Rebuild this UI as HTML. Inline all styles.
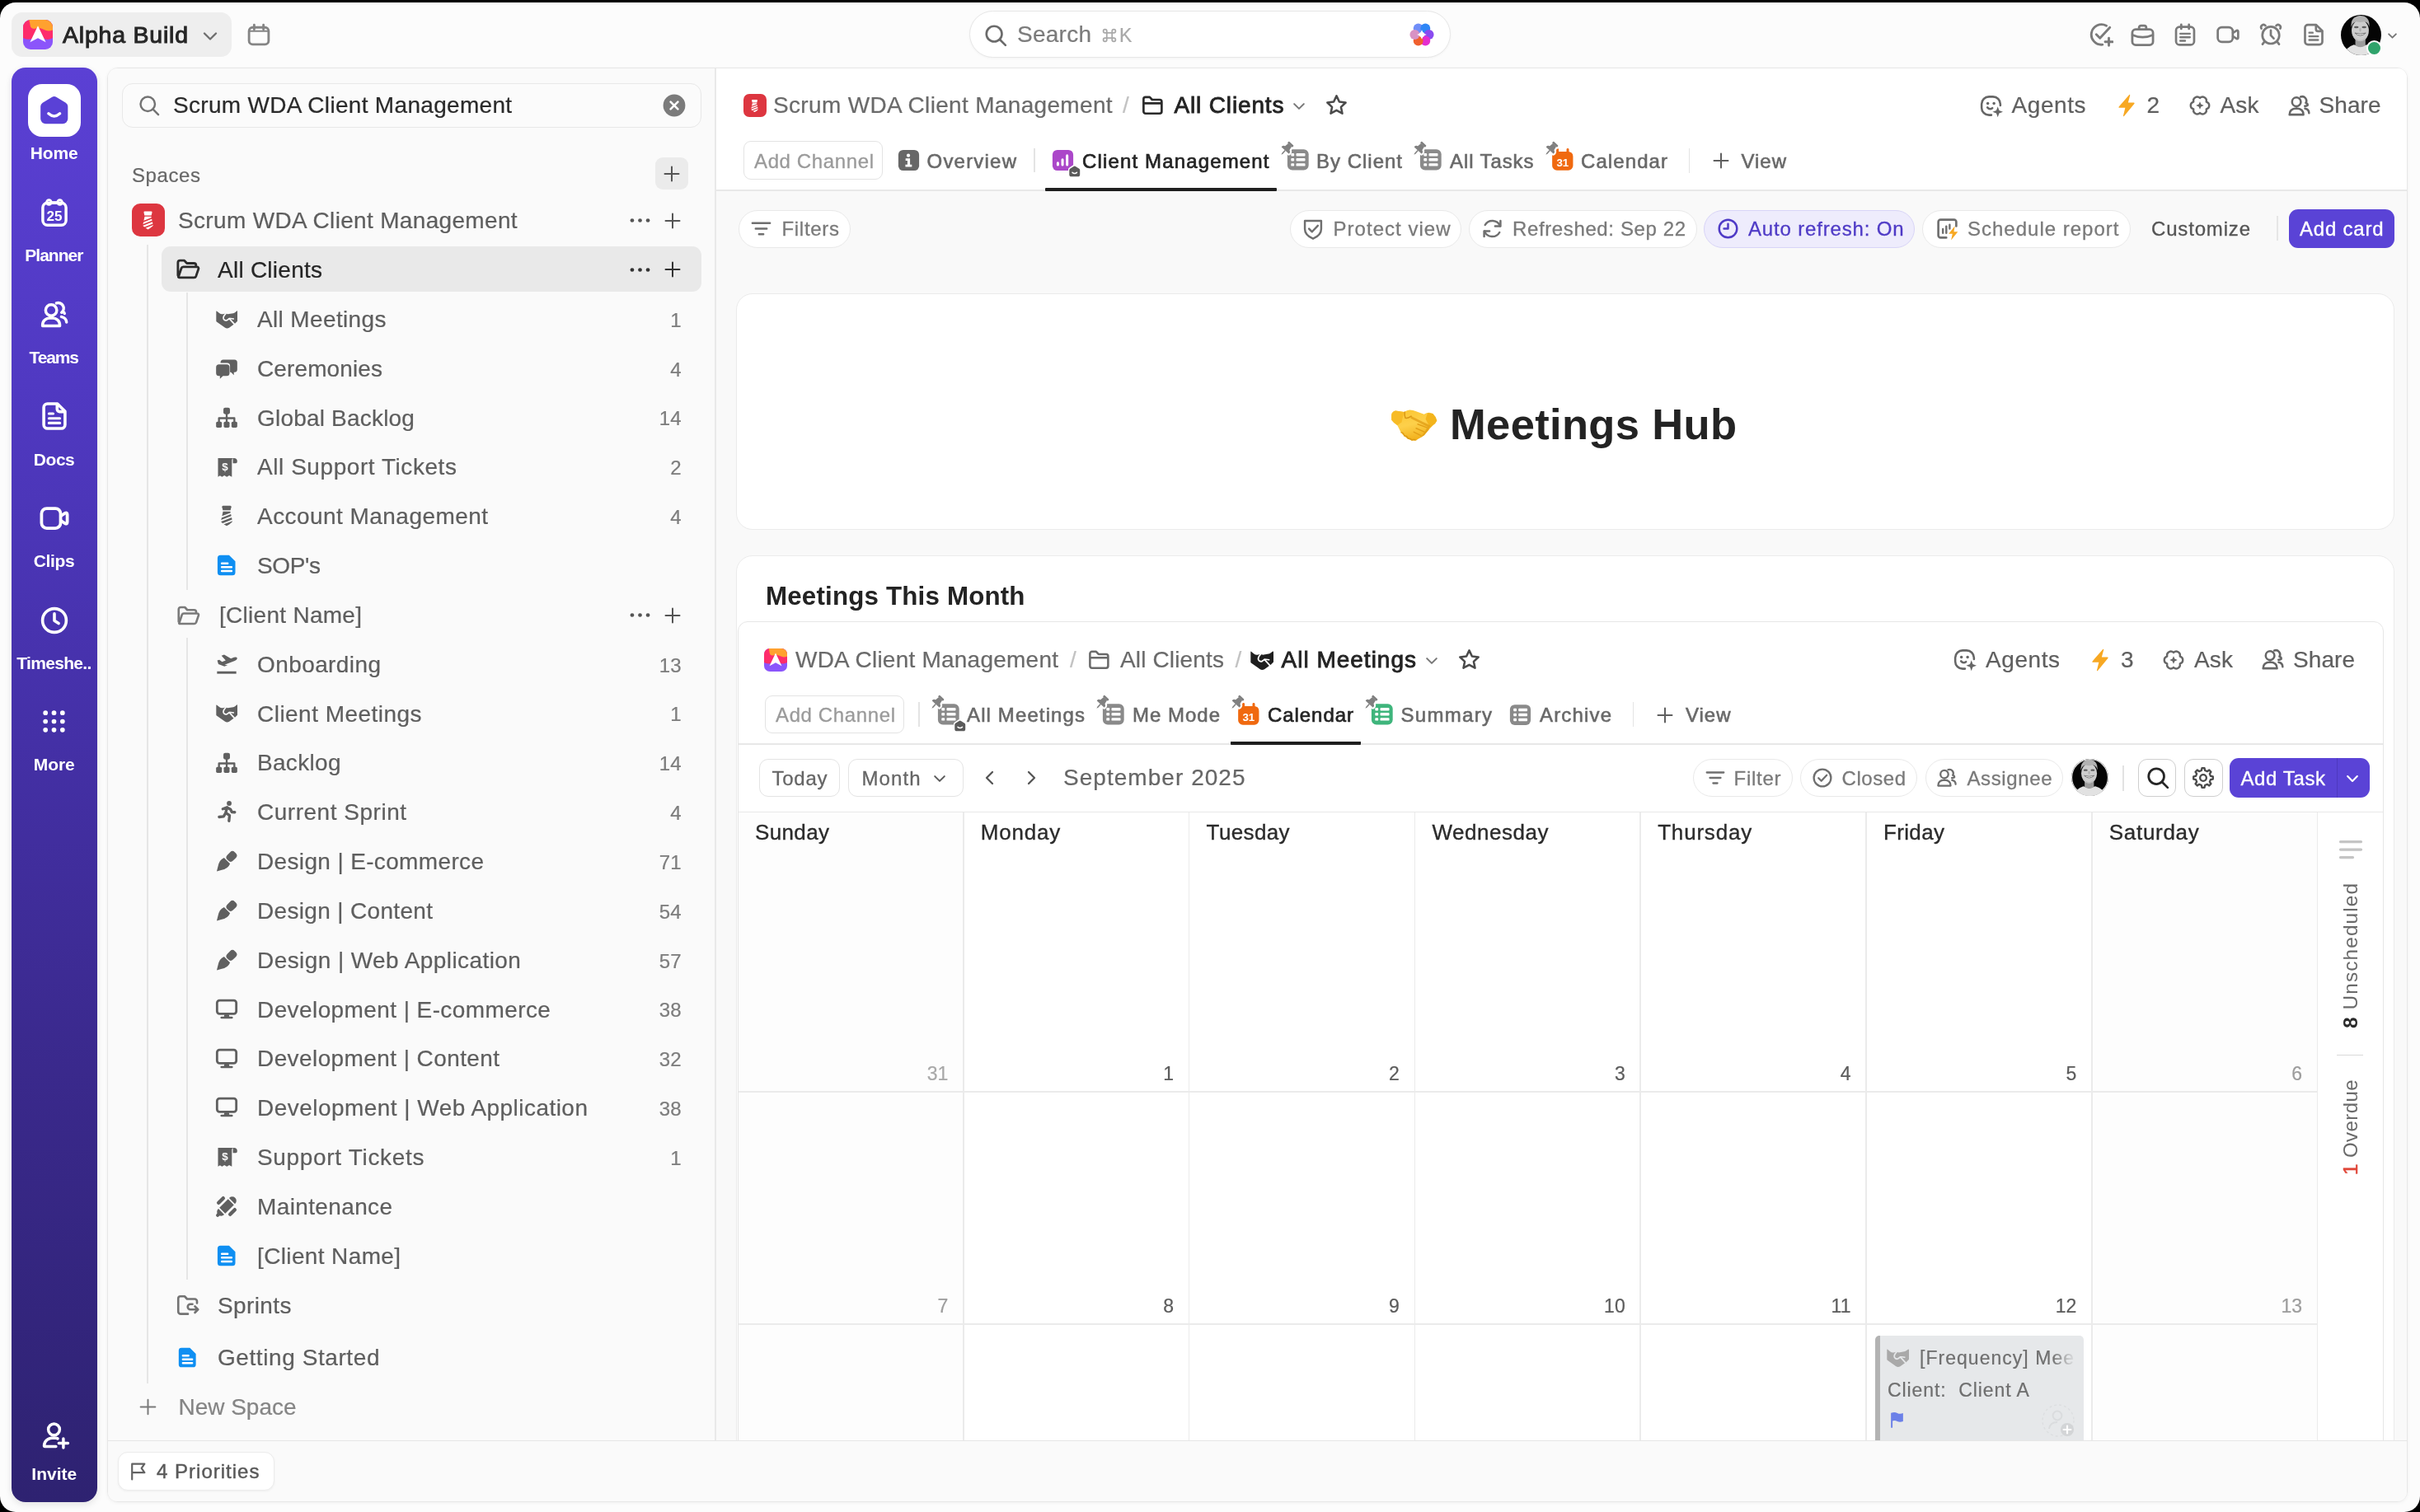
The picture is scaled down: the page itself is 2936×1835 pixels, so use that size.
<!DOCTYPE html>
<html lang="en"><head><meta charset="utf-8"><title>Alpha Build - All Clients</title>
<style>
html,body{margin:0;padding:0;}
body{width:2936px;height:1835px;overflow:hidden;background:#000;position:relative;font-family:"Liberation Sans",sans-serif;-webkit-font-smoothing:antialiased;}
#root{position:absolute;left:0;top:0;width:2936px;height:1835px;overflow:hidden;will-change:transform;}
.b{position:absolute;display:block;}
.t{position:absolute;white-space:pre;font-family:"Liberation Sans",sans-serif;-webkit-text-stroke:.22px currentColor;}
#win{position:absolute;left:0;top:3px;width:2936px;height:1832px;background:#fcfcfc;border-radius:19px;}
#nav{border-radius:17px;background:linear-gradient(180deg,#5b40d4 0%,#5039c2 22%,#4430a6 47%,#3a298c 70%,#2e2271 100%);box-shadow:0 3px 8px rgba(0,0,0,.10);}
#panel{box-sizing:border-box;border:1.5px solid #e7e7e7;border-radius:13px;background:#fff;box-shadow:0 1px 4px rgba(0,0,0,.05);}
.rot{position:absolute;left:0;top:0;white-space:pre;line-height:30px;height:30px;transform-origin:0 0;transform:rotate(-90deg) translate(0,-15px);font-family:"Liberation Sans",sans-serif;}
</style></head>
<body>
<div id="root">
<div id="win"></div>
<div class="b" style="left:14px;top:15px;width:267px;height:54px;background:#eeeeee;border-radius:13px;"></div>
<svg class="b" style="left:28px;top:24px;" width="36" height="36" viewBox="0 0 36 36"><defs><clipPath id="g1"><rect x="0" y="0" width="36" height="36" rx="9.00"/></clipPath></defs><g clip-path="url(#g1)"><rect width="36" height="36" fill="#8b55fb"/><path d="M0 0 H36 V22 Q30 25.5 24 22.6 Q18 19.6 12 22.6 Q6 25.4 0 22 Z" fill="#fe2c6b"/><path d="M7 0 H36 V12.4 Q30 14.6 25.4 12 Q20 9 15.2 10.6 Q9.4 12 8.6 6.6 Q8.4 3 7 0 Z" fill="#ffa12f"/><path d="M18 7.2 L27.6 27.2 L18 22.2 L8.4 27.2 Z" fill="#fff"/></g></svg>
<span class="t" style="left:76.0px;top:24.3px;font-size:28.5px;line-height:37px;color:#262626;letter-spacing:0.78px;-webkit-text-stroke:1px #262626;">Alpha Build</span>
<svg class="b" style="left:242.5px;top:31.5px;" width="24" height="24" viewBox="0 0 24 24"><path d="M5 8.5 L12 15.5 L19 8.5" fill="none" stroke="#6d6d6d" stroke-width="2.3" stroke-linecap="round" stroke-linejoin="round" /></svg>
<svg class="b" style="left:298.5px;top:27.0px;" width="30" height="30" viewBox="0 0 24 24"><rect x="2.5" y="5" width="19" height="16.5" rx="3.5" fill="none" stroke="#858585" stroke-width="2.3"/><path d="M7.5 2.5 V7 M16.5 2.5 V7" fill="none" stroke="#858585" stroke-width="2.3" stroke-linecap="round" stroke-linejoin="round" /><path d="M3 8.5 H21" fill="none" stroke="#858585" stroke-width="1.6" stroke-linecap="round" stroke-linejoin="round" /></svg>
<div class="b" style="left:1176px;top:13px;width:584px;height:57px;background:#fff;border:1.5px solid #e7e7e7;border-radius:29px;box-sizing:border-box;box-shadow:0 1px 3px rgba(0,0,0,.04);"></div>
<svg class="b" style="left:1193.0px;top:27.5px;" width="30" height="30" viewBox="0 0 24 24"><circle cx="10.5" cy="10.5" r="7.5" fill="none" stroke="#6b6b6b" stroke-width="2.1"/><path d="M16 16 L21.5 21.5" fill="none" stroke="#6b6b6b" stroke-width="2.1" stroke-linecap="round" stroke-linejoin="round" /></svg>
<span class="t" style="left:1234.0px;top:24.3px;font-size:28px;line-height:36px;color:#7b7b7b;letter-spacing:0.26px;">Search</span>
<svg class="b" style="left:1335.0px;top:32.0px;" width="22" height="22" viewBox="0 0 24 24"><path d="M8.5 8.5 H15.5 V15.5 H8.5 Z M8.5 8.5 H6.2 a2.3 2.3 0 1 1 2.3 -2.3 Z M15.5 8.5 V6.2 a2.3 2.3 0 1 1 2.3 2.3 Z M15.5 15.5 H17.8 a2.3 2.3 0 1 1 -2.3 2.3 Z M8.5 15.5 V17.8 a2.3 2.3 0 1 1 -2.3 -2.3 Z" fill="none" stroke="#a9a9a9" stroke-width="1.9" stroke-linecap="round" stroke-linejoin="round" /></svg>
<span class="t" style="left:1358.0px;top:28.3px;font-size:23px;line-height:30px;color:#a9a9a9;">K</span>
<svg class="b" style="left:1710px;top:26.8px;" width="30" height="30" viewBox="0 0 24 24"><defs><filter id="aib" x="-10%" y="-10%" width="120%" height="120%"><feGaussianBlur stdDeviation="0.55"/></filter></defs><g filter="url(#aib)"><circle cx="8.55" cy="6.02" r="4.75" fill="#6f8ef8"/><circle cx="15.45" cy="6.02" r="4.75" fill="#2f86f6"/><circle cx="18.90" cy="12.00" r="4.75" fill="#8a4cf0"/><circle cx="15.45" cy="17.98" r="4.75" fill="#e42fcf"/><circle cx="8.55" cy="17.98" r="4.75" fill="#f0602d"/><circle cx="5.10" cy="12.00" r="4.75" fill="#d892c4"/><path d="M12 7.4 L13.4 10.6 L16.6 12 L13.4 13.4 L12 16.6 L10.6 13.4 L7.4 12 L10.6 10.6 Z" fill="#fff" /><circle cx="12" cy="12" r="2.6" fill="#fff" fill-opacity=".6"/></g></svg>
<svg class="b" style="left:2534.0px;top:27.0px;" width="30" height="30" viewBox="0 0 24 24"><path d="M17.2 3.4 A9.8 9.8 0 1 0 13.4 21.7" fill="none" stroke="#7a7a7a" stroke-width="2.3" stroke-linecap="round" stroke-linejoin="round" /><path d="M7.4 11.8 L11 15.4 L20.6 5" fill="none" stroke="#7a7a7a" stroke-width="2.3" stroke-linecap="round" stroke-linejoin="round" /><path d="M19.6 15.4 V22.6 M16 19 H23.2" fill="none" stroke="#7a7a7a" stroke-width="2.3" stroke-linecap="round" stroke-linejoin="round" /></svg>
<svg class="b" style="left:2584.5px;top:27.5px;" width="29" height="29" viewBox="0 0 24 24"><rect x="1.6" y="6.4" width="20.8" height="15.6" rx="3.4" fill="none" stroke="#7a7a7a" stroke-width="2.3"/><path d="M8.4 6.2 V4.6 a2 2 0 0 1 2 -2 H13.6 a2 2 0 0 1 2 2 V6.2" fill="none" stroke="#7a7a7a" stroke-width="2.3" stroke-linecap="round" stroke-linejoin="round" /><path d="M1.8 12 Q12 16.4 22.2 12" fill="none" stroke="#7a7a7a" stroke-width="2.3" stroke-linecap="round" stroke-linejoin="round" /></svg>
<svg class="b" style="left:2637.0px;top:28.0px;" width="28" height="28" viewBox="0 0 24 24"><rect x="2.6" y="4" width="18.8" height="18.6" rx="3.6" fill="none" stroke="#7a7a7a" stroke-width="2.3"/><path d="M8 1.6 V6 M16 1.6 V6" fill="none" stroke="#7a7a7a" stroke-width="2.3" stroke-linecap="round" stroke-linejoin="round" /><path d="M7 11 H17 M7 14.8 H17 M7 18.4 H12" fill="none" stroke="#7a7a7a" stroke-width="2.0" stroke-linecap="round" stroke-linejoin="round" /></svg>
<svg class="b" style="left:2689.0px;top:28.0px;" width="28" height="28" viewBox="0 0 24 24"><rect x="1.4" y="4.4" width="15.6" height="15.2" rx="4.2" fill="none" stroke="#7a7a7a" stroke-width="2.3"/><path d="M17.2 10.2 L21 7.8 Q22.6 7.2 22.6 9 V15 Q22.6 16.8 21 16.2 L17.2 13.8" fill="none" stroke="#7a7a7a" stroke-width="2.3" stroke-linecap="round" stroke-linejoin="round" /></svg>
<svg class="b" style="left:2741.0px;top:28.0px;" width="28" height="28" viewBox="0 0 24 24"><circle cx="12" cy="12.6" r="8.8" fill="none" stroke="#7a7a7a" stroke-width="2.3"/><path d="M12 7.6 V12.8 L15 16" fill="none" stroke="#7a7a7a" stroke-width="2.3" stroke-linecap="round" stroke-linejoin="round" /><path d="M2.2 5.6 a2.6 2.6 0 0 1 4.2 -3 M21.8 5.6 a2.6 2.6 0 0 0 -4.2 -3" fill="none" stroke="#7a7a7a" stroke-width="2.3" stroke-linecap="round" stroke-linejoin="round" /><path d="M5.4 19.4 L3.4 22 M18.6 19.4 L20.6 22" fill="none" stroke="#7a7a7a" stroke-width="2.3" stroke-linecap="round" stroke-linejoin="round" /></svg>
<svg class="b" style="left:2792.5px;top:28.0px;" width="28" height="28" viewBox="0 0 24 24"><path d="M6 1.8 H14.6 L21 8.2 V19.4 a3 3 0 0 1 -3 3 H6 a3 3 0 0 1 -3 -3 V4.8 a3 3 0 0 1 3 -3 Z" fill="none" stroke="#7a7a7a" stroke-width="2.3" stroke-linecap="round" stroke-linejoin="round" /><path d="M14.4 2.2 V6.4 a2 2 0 0 0 2 2 H20.6" fill="none" stroke="#7a7a7a" stroke-width="2.3" stroke-linecap="round" stroke-linejoin="round" /><path d="M7.4 10 H11 M7.4 13.8 H16.6 M7.4 17.6 H16.6" fill="none" stroke="#7a7a7a" stroke-width="2.0" stroke-linecap="round" stroke-linejoin="round" /></svg>
<svg class="b" style="left:2839.8px;top:17.5px;" width="49" height="49" viewBox="0 0 48 48"><defs><clipPath id="g2"><circle cx="24" cy="24" r="24"/></clipPath><filter id="g3" x="-5%" y="-5%" width="110%" height="110%"><feGaussianBlur stdDeviation="0.55"/></filter></defs><g clip-path="url(#g2)"><rect width="48" height="48" fill="#050505"/><g filter="url(#g3)"><path d="M3 49 Q5 38.5 15.5 35.4 L23 38 L31 35.4 Q42 38 45 49 Z" fill="#e2e2e2"/><path d="M17.2 27 H29.2 V36.2 Q23.2 40.6 17.2 36.2 Z" fill="#9c9c9c"/><ellipse cx="23" cy="18.8" rx="10.2" ry="12.6" fill="#cdcdcd"/><path d="M12.4 14.6 Q11 2.4 22.6 1 Q34.6 1 33.8 14.4 Q32.4 8.4 27.4 8 Q23 9.4 18.6 8 Q13.8 8.6 12.4 14.6 Z" fill="#b2b2b2"/><ellipse cx="18.4" cy="14.6" rx="2.7" ry="1.25" fill="#5c5c5c"/><ellipse cx="27.6" cy="14.6" rx="2.7" ry="1.25" fill="#5c5c5c"/><path d="M22 16 Q21.4 19.6 23 20 Q24.6 19.6 24 16 Z" fill="#b0b0b0"/><path d="M16.6 21.6 Q23 27.6 29.6 21.6 Q23 23.6 16.6 21.6 Z" fill="#f7f7f7" stroke="#6e6e6e" stroke-width=".9"/><path d="M14 24 Q23 36 32 24 Q30 31 23 31.6 Q16 31 14 24 Z" fill="#bdbdbd"/></g></g></svg>
<div class="b" style="left:2873.8px;top:51.2px;width:15px;height:15px;border-radius:50%;background:#2fa36b;border:2.5px solid #fcfcfc;box-sizing:content-box;margin:-2.5px"></div>
<svg class="b" style="left:2894.7px;top:35.5px;" width="15" height="15" viewBox="0 0 24 24"><path d="M5 8.5 L12 15.5 L19 8.5" fill="none" stroke="#777" stroke-width="3.0" stroke-linecap="round" stroke-linejoin="round" /></svg>
<div class="b" id="nav" style="left:14px;top:82px;width:104px;height:1741px;"></div>
<div class="b" style="left:34px;top:102px;width:64px;height:64px;background:#fff;border-radius:17px;"></div>
<svg class="b" style="left:47.0px;top:114.7px;" width="37.5" height="37.5" viewBox="0 0 24 24"><path d="M12 1.2 Q12.8 1.2 13.6 1.7 L21 6.2 Q22.6 7.2 22.6 9 V18.6 a4 4 0 0 1 -4 4 H5.4 a4 4 0 0 1 -4 -4 V9 Q1.4 7.2 3 6.2 L10.4 1.7 Q11.2 1.2 12 1.2 Z" fill="#5a41d6" /><path d="M7.6 14.6 Q12 18.6 16.4 14.6" fill="none" stroke="#fff" stroke-width="2.2" stroke-linecap="round" stroke-linejoin="round" /></svg>
<span class="t" style="left:36.8px;top:172.2px;font-size:21px;line-height:27px;color:#fff;letter-spacing:-0.12px;font-weight:700;-webkit-text-stroke:0;">Home</span>
<span class="t" style="left:30.3px;top:296.3px;font-size:21px;line-height:27px;color:#fff;letter-spacing:-1.00px;font-weight:700;-webkit-text-stroke:0;">Planner</span>
<span class="t" style="left:35.5px;top:420.1px;font-size:21px;line-height:27px;color:#fff;letter-spacing:-1.12px;font-weight:700;-webkit-text-stroke:0;">Teams</span>
<span class="t" style="left:40.8px;top:543.6px;font-size:21px;line-height:27px;color:#fff;letter-spacing:-0.45px;font-weight:700;-webkit-text-stroke:0;">Docs</span>
<span class="t" style="left:40.8px;top:667.4px;font-size:21px;line-height:27px;color:#fff;letter-spacing:-0.34px;font-weight:700;-webkit-text-stroke:0;">Clips</span>
<span class="t" style="left:20.3px;top:791.1px;font-size:21px;line-height:27px;color:#fff;letter-spacing:-0.69px;font-weight:700;-webkit-text-stroke:0;">Timeshe..</span>
<span class="t" style="left:40.8px;top:914.4px;font-size:21px;line-height:27px;color:#fff;letter-spacing:-0.06px;font-weight:700;-webkit-text-stroke:0;">More</span>
<span class="t" style="left:38.3px;top:1775.3px;font-size:21px;line-height:27px;color:#fff;letter-spacing:0.03px;font-weight:700;-webkit-text-stroke:0;">Invite</span>
<svg class="b" style="left:47.7px;top:239.7px;" width="36" height="36" viewBox="0 0 24 24"><rect x="2.6" y="4.2" width="18.8" height="18" rx="3.8" fill="none" stroke="#fff" stroke-width="2.3"/><circle cx="7.6" cy="3.6" r="1.9" fill="none" stroke="#fff" stroke-width="1.9"/><circle cx="16.4" cy="3.6" r="1.9" fill="none" stroke="#fff" stroke-width="1.9"/><path d="M9.5 3.8 H14.5" fill="none" stroke="#fff" stroke-width="2.0" stroke-linecap="round" stroke-linejoin="round" /><text x="12" y="18.6" font-family="Liberation Sans, sans-serif" font-weight="700" font-size="11.4" text-anchor="middle" fill="#fff">25</text></svg>
<svg class="b" style="left:47.7px;top:363.5px;" width="36" height="36" viewBox="0 0 24 24"><path d="M9.4 12.8 a4.5 4.5 0 1 0 0 -9 a4.5 4.5 0 0 0 0 9 Z M2.4 21 Q2.2 14.8 9.4 14.6 Q16.6 14.8 16.4 21 Z" fill="none" stroke="#fff" stroke-width="2.3" stroke-linecap="round" stroke-linejoin="round" /><path d="M13.6 2.6 a4.4 4.4 0 0 1 4.2 7.6 Q19.8 8.8 20.2 11 M17.6 13.6 Q21.6 14.6 21.8 18" fill="none" stroke="#fff" stroke-width="2.3" stroke-linecap="round" stroke-linejoin="round" /></svg>
<svg class="b" style="left:47.7px;top:486.8px;" width="36" height="36" viewBox="0 0 24 24"><path d="M6.4 2 H14.4 L20.6 8.2 V19 a3 3 0 0 1 -3 3 H6.4 a3 3 0 0 1 -3 -3 V5 a3 3 0 0 1 3 -3 Z" fill="none" stroke="#fff" stroke-width="2.4" stroke-linecap="round" stroke-linejoin="round" /><path d="M14.2 2.4 V6.4 a2 2 0 0 0 2 2 H20.2" fill="none" stroke="#fff" stroke-width="2.4" stroke-linecap="round" stroke-linejoin="round" /><path d="M7.6 10 H11 M7.6 13.8 H16.4 M7.6 17.6 H16.4" fill="none" stroke="#fff" stroke-width="2.1" stroke-linecap="round" stroke-linejoin="round" /></svg>
<svg class="b" style="left:47.7px;top:610.6px;" width="36" height="36" viewBox="0 0 24 24"><rect x="1.6" y="4" width="15.4" height="16" rx="4.2" fill="none" stroke="#fff" stroke-width="2.5"/><path d="M17.4 10 L20.6 7.8 Q22.4 7 22.4 9 V15 Q22.4 17 20.6 16.2 L17.4 14" fill="none" stroke="#fff" stroke-width="2.5" stroke-linecap="round" stroke-linejoin="round" /></svg>
<svg class="b" style="left:47.7px;top:734.6px;" width="36" height="36" viewBox="0 0 24 24"><circle cx="12" cy="12" r="9.6" fill="none" stroke="#fff" stroke-width="2.4"/><path d="M12 6.6 V12.2 L15.4 14.4" fill="none" stroke="#fff" stroke-width="2.4" stroke-linecap="round" stroke-linejoin="round" /></svg>
<svg class="b" style="left:50.2px;top:860.1px;" width="31" height="31" viewBox="0 0 24 24"><circle cx="4" cy="4" r="2.2" fill="#fff"/><circle cx="4" cy="12" r="2.2" fill="#fff"/><circle cx="4" cy="20" r="2.2" fill="#fff"/><circle cx="12" cy="4" r="2.2" fill="#fff"/><circle cx="12" cy="12" r="2.2" fill="#fff"/><circle cx="12" cy="20" r="2.2" fill="#fff"/><circle cx="20" cy="4" r="2.2" fill="#fff"/><circle cx="20" cy="12" r="2.2" fill="#fff"/><circle cx="20" cy="20" r="2.2" fill="#fff"/></svg>
<svg class="b" style="left:48.5px;top:1723.5px;" width="36" height="36" viewBox="0 0 24 24"><path d="M11 11.8 a4.6 4.6 0 1 0 0 -9.2 a4.6 4.6 0 0 0 0 9.2 Z" fill="none" stroke="#fff" stroke-width="2.3" stroke-linecap="round" stroke-linejoin="round" /><path d="M12.6 21 H3.6 Q3 21 3 20.2 Q3.6 14.2 11 14 Q12.8 14 14 14.6" fill="none" stroke="#fff" stroke-width="2.3" stroke-linecap="round" stroke-linejoin="round" /><path d="M18.6 14.6 V22 M14.9 18.3 H22.3" fill="none" stroke="#fff" stroke-width="2.3" stroke-linecap="round" stroke-linejoin="round" /></svg>
<div class="b" id="panel" style="left:129.5px;top:82px;width:2791.5px;height:1741px;"></div>
<div class="b" style="left:131px;top:83px;width:736px;height:1665px;background:#fafafa;border-top-left-radius:11px;"></div>
<div class="b" style="left:867px;top:83px;width:1.5px;height:1665px;background:#e9e9e9;"></div>
<div class="b" style="left:131px;top:1747.5px;width:2789px;height:1.5px;background:#e6e6e6;"></div>
<div class="b" style="left:131px;top:1749px;width:2789px;height:73px;background:#fafafa;border-radius:0 0 11px 11px;"></div>
<div class="b" style="left:142.5px;top:1762px;width:190.5px;height:47px;background:#fff;border:1px solid #ececec;border-radius:12px;box-sizing:border-box;box-shadow:0 1px 3px rgba(0,0,0,.05);"></div>
<svg class="b" style="left:154.5px;top:1773.0px;" width="25" height="25" viewBox="0 0 24 24"><path d="M5 21.5 V3.5 H19.5 L16 8.5 L19.5 13.5 H5" fill="none" stroke="#636363" stroke-width="2.1" stroke-linecap="round" stroke-linejoin="round" /></svg>
<span class="t" style="left:190.0px;top:1770.3px;font-size:24px;line-height:31px;color:#595959;letter-spacing:1.01px;-webkit-text-stroke:.45px #595959;">4 Priorities</span>
<div class="b" style="left:148px;top:101px;width:703px;height:54px;background:#fbfbfb;border:1.5px solid #e8e8e8;border-radius:13px;box-sizing:border-box;"></div>
<svg class="b" style="left:167.0px;top:114.0px;" width="28" height="28" viewBox="0 0 24 24"><circle cx="10.5" cy="10.5" r="7.5" fill="none" stroke="#737373" stroke-width="2.1"/><path d="M16 16 L21.5 21.5" fill="none" stroke="#737373" stroke-width="2.1" stroke-linecap="round" stroke-linejoin="round" /></svg>
<span class="t" style="left:210.0px;top:109.8px;font-size:28px;line-height:36px;color:#2a2a2a;letter-spacing:0.31px;">Scrum WDA Client Management</span>
<svg class="b" style="left:804px;top:114px" width="28" height="28" viewBox="0 0 28 28"><circle cx="14" cy="14" r="13.4" fill="#7b7b7b"/><path d="M9.6 9.6 L18.4 18.4 M18.4 9.6 L9.6 18.4" stroke="#fff" stroke-width="2.6" stroke-linecap="round"/></svg>
<span class="t" style="left:160.0px;top:196.8px;font-size:24px;line-height:31px;color:#676767;letter-spacing:0.59px;">Spaces</span>
<div class="b" style="left:795px;top:191px;width:40px;height:39px;background:#ebebeb;border-radius:9px;"></div>
<svg class="b" style="left:803.0px;top:198.5px;" width="24" height="24" viewBox="0 0 24 24"><path d="M12 3.5 V20.5 M3.5 12 H20.5" fill="none" stroke="#555" stroke-width="2.0" stroke-linecap="round" stroke-linejoin="round" /></svg>
<div class="b" style="left:178px;top:297px;width:1.5px;height:1382px;background:#e6e6e6;"></div>
<div class="b" style="left:226px;top:355px;width:1.5px;height:361px;background:#e6e6e6;"></div>
<div class="b" style="left:226px;top:774px;width:1.5px;height:779px;background:#e6e6e6;"></div>
<div class="b" style="left:159.5px;top:247px;width:40.0px;height:40px;background:#dd3640;border-radius:10px;"></div>
<svg class="b" style="left:167.0px;top:254.5px;" width="25" height="25" viewBox="0 0 24 24"><path d="M8.2 1.5 H15.8 Q17 1.5 16.8 2.8 L16 6.2 H8 L7.2 2.8 Q7 1.5 8.2 1.5 Z" fill="#fff" /><path d="M8.2 7.5 H15.8 L18 17.5 Q18 19 12 22.5 Q6 19 6 17.5 Z" fill="#fff" /><path d="M6.8 13.2 L16.6 9.4 M6 17.2 L17.6 12.8 M8.2 20.4 L18 16.6" fill="none" stroke="#dd3640" stroke-width="1.5" stroke-linecap="round" stroke-linejoin="round" /></svg>
<span class="t" style="left:216.0px;top:249.8px;font-size:28px;line-height:36px;color:#5e5e5e;letter-spacing:0.33px;">Scrum WDA Client Management</span>
<svg class="b" style="left:762.5px;top:254.0px;" width="27" height="27" viewBox="0 0 24 24"><circle cx="3.5" cy="12" r="2.1" fill="#555"/><circle cx="12" cy="12" r="2.1" fill="#555"/><circle cx="20.5" cy="12" r="2.1" fill="#555"/></svg>
<svg class="b" style="left:803.5px;top:255.5px;" width="24" height="24" viewBox="0 0 24 24"><path d="M12 3.5 V20.5 M3.5 12 H20.5" fill="none" stroke="#555" stroke-width="2.0" stroke-linecap="round" stroke-linejoin="round" /></svg>
<div class="b" style="left:196px;top:299.3px;width:655px;height:55.19999999999999px;background:#e9e9e9;border-radius:11px;"></div>
<svg class="b" style="left:212.3px;top:311.1px;" width="31" height="31" viewBox="0 0 24 24"><path d="M3 18 V6 a2 2 0 0 1 2 -2 H9 l2.4 2.6 H18 a2 2 0 0 1 2 2 V10 M3.4 19.6 L6.2 11.3 a2 2 0 0 1 1.9 -1.3 H21 a1.4 1.4 0 0 1 1.3 1.9 L20 18.7 a2 2 0 0 1 -1.9 1.3 H4.6 a1.4 1.4 0 0 1 -1.2 -.4 Z" fill="none" stroke="#2c2c2c" stroke-width="2.2" stroke-linecap="round" stroke-linejoin="round" /></svg>
<span class="t" style="left:264.0px;top:310.1px;font-size:28px;line-height:36px;color:#252525;letter-spacing:0.25px;">All Clients</span>
<svg class="b" style="left:762.5px;top:313.5px;" width="27" height="27" viewBox="0 0 24 24"><circle cx="3.5" cy="12" r="2.1" fill="#333"/><circle cx="12" cy="12" r="2.1" fill="#333"/><circle cx="20.5" cy="12" r="2.1" fill="#333"/></svg>
<svg class="b" style="left:803.5px;top:315.0px;" width="24" height="24" viewBox="0 0 24 24"><path d="M12 3.5 V20.5 M3.5 12 H20.5" fill="none" stroke="#333" stroke-width="2.0" stroke-linecap="round" stroke-linejoin="round" /></svg>
<svg class="b" style="left:261.8px;top:373.8px;" width="26.4" height="26.4" viewBox="0 0 24 24"><g transform="translate(0 2.6) scale(0.923)"><path d="M0.9 0.6 L4 3.2 Q6 4.7 8 4.3 L12 3.5 L14 4.4 L20.5 3.3 Q21.6 3.2 22.4 2.6 L25.2 0.5 Q26 0.3 26 1.2 V12.4 L23.2 15.2 L15.8 20.6 Q13.2 22.2 10.6 20.4 L0.8 13.4 Q0.3 13 0.3 12.4 V1.2 Q0.3 0.3 0.9 0.6 Z" fill="#606060" /><path d="M11.8 3.6 Q8.2 7 9 9.8 Q10.6 12.8 13.4 11.4 L15.9 9.6 L21.8 16" fill="none" stroke="#fafafa" stroke-width="1.7" stroke-linecap="round" stroke-linejoin="round" /><path d="M15.9 9.6 Q18.4 9.2 21 10" fill="none" stroke="#fafafa" stroke-width="1.5" stroke-linecap="round" stroke-linejoin="round" /></g></svg>
<span class="t" style="left:312.0px;top:369.8px;font-size:28px;line-height:36px;color:#5e5e5e;letter-spacing:0.36px;">All Meetings</span>
<span class="t" style="left:813.2px;top:372.8px;font-size:24px;line-height:31px;color:#7d7d7d;">1</span>
<svg class="b" style="left:261.0px;top:432.8px;" width="28" height="28" viewBox="0 0 24 24"><path d="M8.5 3 H20 a3 3 0 0 1 3 3 V13 a3 3 0 0 1 -3 3 H19.5 V19 L16.5 16 H15.5 V9.5 a3 3 0 0 0 -3 -3 H5.6 V6 a3 3 0 0 1 2.9 -3 Z" fill="#606060" /><path d="M4 8 H12 a3 3 0 0 1 3 3 V17 a3 3 0 0 1 -3 3 H8.2 L5 23 V20 H4 a3 3 0 0 1 -3 -3 V11 a3 3 0 0 1 3 -3 Z" fill="#606060" /></svg>
<span class="t" style="left:312.0px;top:429.7px;font-size:28px;line-height:36px;color:#5e5e5e;letter-spacing:0.12px;">Ceremonies</span>
<span class="t" style="left:813.2px;top:432.6px;font-size:24px;line-height:31px;color:#7d7d7d;">4</span>
<svg class="b" style="left:261.0px;top:492.7px;" width="28" height="28" viewBox="0 0 24 24"><rect x="8.6" y="1.5" width="6.8" height="6.8" rx="1.8" fill="#606060"/><rect x="1" y="16" width="6" height="6.2" rx="1.4" fill="#606060"/><rect x="9" y="16" width="6" height="6.2" rx="1.4" fill="#606060"/><rect x="17" y="16" width="6" height="6.2" rx="1.4" fill="#606060"/><path d="M12 8 V16 M4 16 V12.4 H20 V16" fill="none" stroke="#606060" stroke-width="2.0" stroke-linecap="round" stroke-linejoin="round" /></svg>
<span class="t" style="left:312.0px;top:489.5px;font-size:28px;line-height:36px;color:#5e5e5e;letter-spacing:0.20px;">Global Backlog</span>
<span class="t" style="left:799.8px;top:492.4px;font-size:24px;line-height:31px;color:#7d7d7d;">14</span>
<svg class="b" style="left:261.0px;top:552.5px;" width="28" height="28" viewBox="0 0 24 24"><path d="M3 2.5 H18.5 V8 H21.5 Q23 8 23 6 Q23 2.5 19.5 2.5 H19 Q17.4 2.7 17.4 5 V22 L14.6 20.6 L12.2 22 L9.6 20.6 L7.2 22 L5 20.8 L3 22 Z" fill="#606060" /><text x="10.2" y="15.6" font-family="Liberation Sans, sans-serif" font-weight="700" font-size="11.5" text-anchor="middle" fill="#fafafa">$</text></svg>
<span class="t" style="left:312.0px;top:549.3px;font-size:28px;line-height:36px;color:#5e5e5e;letter-spacing:0.56px;">All Support Tickets</span>
<span class="t" style="left:813.2px;top:552.3px;font-size:24px;line-height:31px;color:#7d7d7d;">2</span>
<svg class="b" style="left:261.0px;top:612.3px;" width="28" height="28" viewBox="0 0 24 24"><path d="M8.2 1.5 H15.8 Q17 1.5 16.8 2.8 L16 6.2 H8 L7.2 2.8 Q7 1.5 8.2 1.5 Z" fill="#606060" /><path d="M8.2 7.5 H15.8 L18 17.5 Q18 19 12 22.5 Q6 19 6 17.5 Z" fill="#606060" /><path d="M6.8 13.2 L16.6 9.4 M6 17.2 L17.6 12.8 M8.2 20.4 L18 16.6" fill="none" stroke="#fafafa" stroke-width="1.5" stroke-linecap="round" stroke-linejoin="round" /></svg>
<span class="t" style="left:312.0px;top:609.2px;font-size:28px;line-height:36px;color:#5e5e5e;letter-spacing:0.45px;">Account Management</span>
<span class="t" style="left:813.2px;top:612.1px;font-size:24px;line-height:31px;color:#7d7d7d;">4</span>
<svg class="b" style="left:261.0px;top:672.2px;" width="28" height="28" viewBox="0 0 24 24"><path d="M5.5 1.5 H14.5 L21 8 V19.5 a3 3 0 0 1 -3 3 H5.5 a3 3 0 0 1 -3 -3 V4.5 a3 3 0 0 1 3 -3 Z" fill="#0f8ff2" /><path d="M7 10 H13 M7 14 H17 M7 18 H17" fill="none" stroke="#fff" stroke-width="2.2" stroke-linecap="round" stroke-linejoin="round" /></svg>
<span class="t" style="left:312.0px;top:669.0px;font-size:28px;line-height:36px;color:#5e5e5e;letter-spacing:-0.37px;">SOP&#x27;s</span>
<svg class="b" style="left:213.0px;top:731.5px;" width="30" height="30" viewBox="0 0 24 24"><path d="M3 18 V6 a2 2 0 0 1 2 -2 H9 l2.4 2.6 H18 a2 2 0 0 1 2 2 V10 M3.4 19.6 L6.2 11.3 a2 2 0 0 1 1.9 -1.3 H21 a1.4 1.4 0 0 1 1.3 1.9 L20 18.7 a2 2 0 0 1 -1.9 1.3 H4.6 a1.4 1.4 0 0 1 -1.2 -.4 Z" fill="none" stroke="#7a7a7a" stroke-width="2.1" stroke-linecap="round" stroke-linejoin="round" /></svg>
<span class="t" style="left:266.0px;top:728.8px;font-size:28px;line-height:36px;color:#5e5e5e;letter-spacing:0.28px;">[Client Name]</span>
<svg class="b" style="left:762.5px;top:733.0px;" width="27" height="27" viewBox="0 0 24 24"><circle cx="3.5" cy="12" r="2.1" fill="#555"/><circle cx="12" cy="12" r="2.1" fill="#555"/><circle cx="20.5" cy="12" r="2.1" fill="#555"/></svg>
<svg class="b" style="left:803.5px;top:734.5px;" width="24" height="24" viewBox="0 0 24 24"><path d="M12 3.5 V20.5 M3.5 12 H20.5" fill="none" stroke="#555" stroke-width="2.0" stroke-linecap="round" stroke-linejoin="round" /></svg>
<svg class="b" style="left:261.0px;top:791.8px;" width="28" height="28" viewBox="0 0 24 24"><path d="M2 19.5 H22 V22 H2 Z" fill="#606060" /><path d="M2.2 8.2 L4.4 7.4 L7.2 9.6 L11 8.2 L6.6 3.2 L9.4 2.2 L16.4 6.2 L19.6 5 Q22.6 4.2 23 6 Q22.8 7.6 20.4 8.6 L9.8 12.6 L13 13 L9.6 14.4 L3.4 12 Z" fill="#606060" /></svg>
<span class="t" style="left:312.0px;top:788.6px;font-size:28px;line-height:36px;color:#5e5e5e;letter-spacing:0.41px;">Onboarding</span>
<span class="t" style="left:799.8px;top:791.6px;font-size:24px;line-height:31px;color:#7d7d7d;">13</span>
<svg class="b" style="left:261.8px;top:852.4px;" width="26.4" height="26.4" viewBox="0 0 24 24"><g transform="translate(0 2.6) scale(0.923)"><path d="M0.9 0.6 L4 3.2 Q6 4.7 8 4.3 L12 3.5 L14 4.4 L20.5 3.3 Q21.6 3.2 22.4 2.6 L25.2 0.5 Q26 0.3 26 1.2 V12.4 L23.2 15.2 L15.8 20.6 Q13.2 22.2 10.6 20.4 L0.8 13.4 Q0.3 13 0.3 12.4 V1.2 Q0.3 0.3 0.9 0.6 Z" fill="#606060" /><path d="M11.8 3.6 Q8.2 7 9 9.8 Q10.6 12.8 13.4 11.4 L15.9 9.6 L21.8 16" fill="none" stroke="#fafafa" stroke-width="1.7" stroke-linecap="round" stroke-linejoin="round" /><path d="M15.9 9.6 Q18.4 9.2 21 10" fill="none" stroke="#fafafa" stroke-width="1.5" stroke-linecap="round" stroke-linejoin="round" /></g></svg>
<span class="t" style="left:312.0px;top:848.5px;font-size:28px;line-height:36px;color:#5e5e5e;letter-spacing:0.47px;">Client Meetings</span>
<span class="t" style="left:813.2px;top:851.4px;font-size:24px;line-height:31px;color:#7d7d7d;">1</span>
<svg class="b" style="left:261.0px;top:911.5px;" width="28" height="28" viewBox="0 0 24 24"><rect x="8.6" y="1.5" width="6.8" height="6.8" rx="1.8" fill="#606060"/><rect x="1" y="16" width="6" height="6.2" rx="1.4" fill="#606060"/><rect x="9" y="16" width="6" height="6.2" rx="1.4" fill="#606060"/><rect x="17" y="16" width="6" height="6.2" rx="1.4" fill="#606060"/><path d="M12 8 V16 M4 16 V12.4 H20 V16" fill="none" stroke="#606060" stroke-width="2.0" stroke-linecap="round" stroke-linejoin="round" /></svg>
<span class="t" style="left:312.0px;top:908.3px;font-size:28px;line-height:36px;color:#5e5e5e;letter-spacing:0.31px;">Backlog</span>
<span class="t" style="left:799.8px;top:911.3px;font-size:24px;line-height:31px;color:#7d7d7d;">14</span>
<svg class="b" style="left:261.0px;top:971.3px;" width="28" height="28" viewBox="0 0 24 24"><circle cx="14.6" cy="3.4" r="2.5" fill="#606060"/><path d="M8 9.2 L12.4 7.6 L11 13.2 L15 16 L14.4 21.6 M12.4 7.8 L16 9.6 L17.4 12.4 L20.4 12.6 M11 13.4 L8.8 17 L4.2 17.6" fill="none" stroke="#606060" stroke-width="2.9" stroke-linecap="round" stroke-linejoin="round" /></svg>
<span class="t" style="left:312.0px;top:968.1px;font-size:28px;line-height:36px;color:#5e5e5e;letter-spacing:0.52px;">Current Sprint</span>
<span class="t" style="left:813.2px;top:971.1px;font-size:24px;line-height:31px;color:#7d7d7d;">4</span>
<svg class="b" style="left:261.0px;top:1031.1px;" width="28" height="28" viewBox="0 0 24 24"><rect x="11.6" y="3" width="11" height="8.4" rx="3.4" fill="#606060" transform="rotate(-45 17.1 7.2)"/><path d="M9.3 8.5 L15.5 14.7 Q13.6 20 6.2 21.4 L1.7 22.7 L2.8 18.2 Q4 10.6 9.3 8.5 Z" fill="#606060" /></svg>
<span class="t" style="left:312.0px;top:1028.0px;font-size:28px;line-height:36px;color:#5e5e5e;letter-spacing:0.35px;">Design | E-commerce</span>
<span class="t" style="left:799.8px;top:1030.9px;font-size:24px;line-height:31px;color:#7d7d7d;">71</span>
<svg class="b" style="left:261.0px;top:1091.0px;" width="28" height="28" viewBox="0 0 24 24"><rect x="11.6" y="3" width="11" height="8.4" rx="3.4" fill="#606060" transform="rotate(-45 17.1 7.2)"/><path d="M9.3 8.5 L15.5 14.7 Q13.6 20 6.2 21.4 L1.7 22.7 L2.8 18.2 Q4 10.6 9.3 8.5 Z" fill="#606060" /></svg>
<span class="t" style="left:312.0px;top:1087.8px;font-size:28px;line-height:36px;color:#5e5e5e;letter-spacing:0.33px;">Design | Content</span>
<span class="t" style="left:799.8px;top:1090.7px;font-size:24px;line-height:31px;color:#7d7d7d;">54</span>
<svg class="b" style="left:261.0px;top:1150.8px;" width="28" height="28" viewBox="0 0 24 24"><rect x="11.6" y="3" width="11" height="8.4" rx="3.4" fill="#606060" transform="rotate(-45 17.1 7.2)"/><path d="M9.3 8.5 L15.5 14.7 Q13.6 20 6.2 21.4 L1.7 22.7 L2.8 18.2 Q4 10.6 9.3 8.5 Z" fill="#606060" /></svg>
<span class="t" style="left:312.0px;top:1147.6px;font-size:28px;line-height:36px;color:#5e5e5e;letter-spacing:0.42px;">Design | Web Application</span>
<span class="t" style="left:799.8px;top:1150.6px;font-size:24px;line-height:31px;color:#7d7d7d;">57</span>
<svg class="b" style="left:261.0px;top:1210.6px;" width="28" height="28" viewBox="0 0 24 24"><rect x="2" y="2.6" width="20" height="14" rx="2.6" fill="none" stroke="#606060" stroke-width="2.4"/><path d="M9.8 16.6 H14.2 L14.8 19.4 H17.4 a1.1 1.1 0 0 1 0 2.2 H6.6 a1.1 1.1 0 0 1 0 -2.2 H9.2 Z" fill="#606060" /></svg>
<span class="t" style="left:312.0px;top:1207.5px;font-size:28px;line-height:36px;color:#5e5e5e;letter-spacing:0.41px;">Development | E-commerce</span>
<span class="t" style="left:799.8px;top:1210.4px;font-size:24px;line-height:31px;color:#7d7d7d;">38</span>
<svg class="b" style="left:261.0px;top:1270.5px;" width="28" height="28" viewBox="0 0 24 24"><rect x="2" y="2.6" width="20" height="14" rx="2.6" fill="none" stroke="#606060" stroke-width="2.4"/><path d="M9.8 16.6 H14.2 L14.8 19.4 H17.4 a1.1 1.1 0 0 1 0 2.2 H6.6 a1.1 1.1 0 0 1 0 -2.2 H9.2 Z" fill="#606060" /></svg>
<span class="t" style="left:312.0px;top:1267.3px;font-size:28px;line-height:36px;color:#5e5e5e;letter-spacing:0.41px;">Development | Content</span>
<span class="t" style="left:799.8px;top:1270.2px;font-size:24px;line-height:31px;color:#7d7d7d;">32</span>
<svg class="b" style="left:261.0px;top:1330.3px;" width="28" height="28" viewBox="0 0 24 24"><rect x="2" y="2.6" width="20" height="14" rx="2.6" fill="none" stroke="#606060" stroke-width="2.4"/><path d="M9.8 16.6 H14.2 L14.8 19.4 H17.4 a1.1 1.1 0 0 1 0 2.2 H6.6 a1.1 1.1 0 0 1 0 -2.2 H9.2 Z" fill="#606060" /></svg>
<span class="t" style="left:312.0px;top:1327.1px;font-size:28px;line-height:36px;color:#5e5e5e;letter-spacing:0.46px;">Development | Web Application</span>
<span class="t" style="left:799.8px;top:1330.1px;font-size:24px;line-height:31px;color:#7d7d7d;">38</span>
<svg class="b" style="left:261.0px;top:1390.1px;" width="28" height="28" viewBox="0 0 24 24"><path d="M3 2.5 H18.5 V8 H21.5 Q23 8 23 6 Q23 2.5 19.5 2.5 H19 Q17.4 2.7 17.4 5 V22 L14.6 20.6 L12.2 22 L9.6 20.6 L7.2 22 L5 20.8 L3 22 Z" fill="#606060" /><text x="10.2" y="15.6" font-family="Liberation Sans, sans-serif" font-weight="700" font-size="11.5" text-anchor="middle" fill="#fafafa">$</text></svg>
<span class="t" style="left:312.0px;top:1386.9px;font-size:28px;line-height:36px;color:#5e5e5e;letter-spacing:0.68px;">Support Tickets</span>
<span class="t" style="left:813.2px;top:1389.9px;font-size:24px;line-height:31px;color:#7d7d7d;">1</span>
<svg class="b" style="left:261.0px;top:1449.9px;" width="28" height="28" viewBox="0 0 24 24"><path d="M3.6 8.4 L8.4 3.6 M15.6 20.4 L20.4 15.6" fill="none" stroke="#606060" stroke-width="3.8" stroke-linecap="round" stroke-linejoin="round" /><path d="M6.2 17.8 L17.8 6.2" fill="none" stroke="#606060" stroke-width="8.6" stroke-linecap="round" stroke-linejoin="round" /><path d="M13.2 3.2 L20.8 10.8 M3.2 13.2 L10.8 20.8" fill="none" stroke="#fafafa" stroke-width="1.5" stroke-linecap="round" stroke-linejoin="round" /><path d="M2.6 21.4 L4.4 19.6" fill="none" stroke="#606060" stroke-width="3.4" stroke-linecap="round" stroke-linejoin="round" /></svg>
<span class="t" style="left:312.0px;top:1446.8px;font-size:28px;line-height:36px;color:#5e5e5e;letter-spacing:0.37px;">Maintenance</span>
<svg class="b" style="left:261.0px;top:1509.8px;" width="28" height="28" viewBox="0 0 24 24"><path d="M5.5 1.5 H14.5 L21 8 V19.5 a3 3 0 0 1 -3 3 H5.5 a3 3 0 0 1 -3 -3 V4.5 a3 3 0 0 1 3 -3 Z" fill="#0f8ff2" /><path d="M7 10 H13 M7 14 H17 M7 18 H17" fill="none" stroke="#fff" stroke-width="2.2" stroke-linecap="round" stroke-linejoin="round" /></svg>
<span class="t" style="left:312.0px;top:1506.6px;font-size:28px;line-height:36px;color:#5e5e5e;letter-spacing:0.37px;">[Client Name]</span>
<svg class="b" style="left:212.5px;top:1569.0px;" width="30" height="30" viewBox="0 0 24 24"><path d="M12 20.5 H5 a2.4 2.4 0 0 1 -2.4 -2.4 V5.6 a2.2 2.2 0 0 1 2.2 -2.2 H8.8 l2.4 2.6 H18.6 a2.2 2.2 0 0 1 2.2 2.2 V10" fill="none" stroke="#737373" stroke-width="2.1" stroke-linecap="round" stroke-linejoin="round" /><path d="M21.6 16.2 H14.4 a2.6 2.6 0 0 1 0 -5.2 H16.4 M18.8 13.2 L21.8 16.2 L18.8 19.2" fill="none" stroke="#737373" stroke-width="2.1" stroke-linecap="round" stroke-linejoin="round" /></svg>
<span class="t" style="left:264.0px;top:1566.8px;font-size:28px;line-height:36px;color:#5e5e5e;letter-spacing:0.39px;">Sprints</span>
<svg class="b" style="left:213.5px;top:1634.0px;" width="27" height="27" viewBox="0 0 24 24"><path d="M5.5 1.5 H14.5 L21 8 V19.5 a3 3 0 0 1 -3 3 H5.5 a3 3 0 0 1 -3 -3 V4.5 a3 3 0 0 1 3 -3 Z" fill="#0f8ff2" /><path d="M7 10 H13 M7 14 H17 M7 18 H17" fill="none" stroke="#fff" stroke-width="2.2" stroke-linecap="round" stroke-linejoin="round" /></svg>
<span class="t" style="left:264.0px;top:1630.3px;font-size:28px;line-height:36px;color:#5e5e5e;letter-spacing:0.58px;">Getting Started</span>
<svg class="b" style="left:166.5px;top:1695.0px;" width="25" height="25" viewBox="0 0 24 24"><path d="M12 3.5 V20.5 M3.5 12 H20.5" fill="none" stroke="#7a7a7a" stroke-width="1.9" stroke-linecap="round" stroke-linejoin="round" /></svg>
<span class="t" style="left:216.5px;top:1690.3px;font-size:28px;line-height:36px;color:#858585;letter-spacing:-0.02px;">New Space</span>
<div class="b" style="left:868.5px;top:83px;width:2051.5px;height:147px;background:#fff;border-top-right-radius:11px;"></div>
<div class="b" style="left:868.5px;top:230px;width:2051.5px;height:1.5px;background:#e8e8e8;"></div>
<div class="b" style="left:868.5px;top:231.5px;width:2051.5px;height:1516.0px;background:#f9f9f9;"></div>
<div class="b" style="left:901.5px;top:114px;width:28.0px;height:28px;background:#dd3640;border-radius:7px;"></div>
<svg class="b" style="left:907.0px;top:119.5px;" width="17" height="17" viewBox="0 0 24 24"><path d="M8.2 1.5 H15.8 Q17 1.5 16.8 2.8 L16 6.2 H8 L7.2 2.8 Q7 1.5 8.2 1.5 Z" fill="#fff" /><path d="M8.2 7.5 H15.8 L18 17.5 Q18 19 12 22.5 Q6 19 6 17.5 Z" fill="#fff" /><path d="M6.8 13.2 L16.6 9.4 M6 17.2 L17.6 12.8 M8.2 20.4 L18 16.6" fill="none" stroke="#dd3640" stroke-width="1.5" stroke-linecap="round" stroke-linejoin="round" /></svg>
<span class="t" style="left:938.0px;top:110.3px;font-size:28px;line-height:36px;color:#6a6a6a;letter-spacing:0.33px;">Scrum WDA Client Management</span>
<span class="t" style="left:1362.0px;top:110.3px;font-size:28px;line-height:36px;color:#c2c2c2;">/</span>
<svg class="b" style="left:1383.5px;top:113.0px;" width="29" height="29" viewBox="0 0 24 24"><path d="M2.8 18.5 V6 a2 2 0 0 1 2 -2 H9 l2.4 2.6 H19 a2 2 0 0 1 2 2 V18.5 a2 2 0 0 1 -2 2 H4.8 a2 2 0 0 1 -2 -2 Z M3 10.2 H21" fill="none" stroke="#2a2a2a" stroke-width="2.2" stroke-linecap="round" stroke-linejoin="round" /></svg>
<span class="t" style="left:1424.5px;top:110.3px;font-size:28px;line-height:36px;color:#232323;letter-spacing:0.85px;-webkit-text-stroke:.85px #232323;">All Clients</span>
<svg class="b" style="left:1566.0px;top:119.0px;" width="20" height="20" viewBox="0 0 24 24"><path d="M5 8.5 L12 15.5 L19 8.5" fill="none" stroke="#777" stroke-width="2.4" stroke-linecap="round" stroke-linejoin="round" /></svg>
<svg class="b" style="left:1607.0px;top:113.0px;" width="29" height="29" viewBox="0 0 24 24"><path d="M12 2.8 L14.8 8.7 L21.2 9.5 L16.5 14 L17.8 20.4 L12 17.2 L6.2 20.4 L7.5 14 L2.8 9.5 L9.2 8.7 Z" fill="none" stroke="#4a4a4a" stroke-width="2.1" stroke-linecap="round" stroke-linejoin="round" /></svg>
<svg class="b" style="left:2400.5px;top:113.5px;" width="29" height="29" viewBox="0 0 24 24"><path d="M21.4 11.6 V10.2 A7.4 7.4 0 0 0 14 2.8 H10 A7.4 7.4 0 0 0 2.6 10.2 V13.8 A7.4 7.4 0 0 0 10 21.2 H12.4" fill="none" stroke="#666" stroke-width="2.1" stroke-linecap="round" stroke-linejoin="round" /><circle cx="8.8" cy="9.6" r="1.45" fill="#666"/><circle cx="15" cy="9.6" r="1.45" fill="#666"/><path d="M8.4 13.6 Q10.6 16.2 13.4 14.2" fill="none" stroke="#666" stroke-width="2.1" stroke-linecap="round" stroke-linejoin="round" /><path d="M18.8 12.6 L20.2 16.6 L24 18 L20.2 19.4 L18.8 23.4 L17.4 19.4 L13.6 18 L17.4 16.6 Z" fill="#666" /></svg>
<span class="t" style="left:2440.5px;top:110.3px;font-size:28px;line-height:36px;color:#5f5f5f;letter-spacing:0.57px;">Agents</span>
<svg class="b" style="left:2565.5px;top:114.0px;" width="28" height="28" viewBox="0 0 24 24"><path d="M15 0.6 Q15.8 0.4 15.6 1.4 L13.6 9 H19.6 Q20.8 9.2 20 10.2 L9.4 23.2 Q8.4 23.8 8.6 22.6 L10.6 14.4 H4.4 Q3.2 14.2 4 13.2 Z" fill="#f7a823" /></svg>
<span class="t" style="left:2604.5px;top:110.3px;font-size:28px;line-height:36px;color:#5f5f5f;">2</span>
<svg class="b" style="left:2654.5px;top:114.0px;" width="28" height="28" viewBox="0 0 24 24"><path d="M5.36 8.16 A3.95 3.95 0 0 1 12.00 4.33 A3.95 3.95 0 0 1 18.64 8.16 A3.95 3.95 0 0 1 18.64 15.84 A3.95 3.95 0 0 1 12.00 19.67 A3.95 3.95 0 0 1 5.36 15.84 A3.95 3.95 0 0 1 5.36 8.16 Z" fill="none" stroke="#666" stroke-width="2.0" stroke-linecap="round" stroke-linejoin="round" /><path d="M12 7.9 L13.2 10.8 L16.1 12 L13.2 13.2 L12 16.1 L10.8 13.2 L7.9 12 L10.8 10.8 Z" fill="#666" /></svg>
<span class="t" style="left:2693.5px;top:110.3px;font-size:28px;line-height:36px;color:#5f5f5f;letter-spacing:0.16px;">Ask</span>
<svg class="b" style="left:2774.5px;top:113.5px;" width="29" height="29" viewBox="0 0 24 24"><path d="M9.2 12.4 a4.4 4.4 0 1 0 0 -8.8 a4.4 4.4 0 0 0 0 8.8 Z M2.2 20.8 Q2.2 14.6 9.2 14.4 Q16.2 14.6 16.2 20.8 Z" fill="none" stroke="#666" stroke-width="2.1" stroke-linecap="round" stroke-linejoin="round" /><path d="M13.4 2.9 a4.3 4.3 0 0 1 5.2 6.2 Q20.6 9.4 20.4 11.4 Q19 12.4 17.6 12.2 M17.8 14.6 Q21.8 15.4 21.8 19.2" fill="none" stroke="#666" stroke-width="2.1" stroke-linecap="round" stroke-linejoin="round" /></svg>
<span class="t" style="left:2813.5px;top:110.3px;font-size:28px;line-height:36px;color:#5f5f5f;letter-spacing:0.07px;">Share</span>
<div class="b" style="left:902px;top:171px;width:169px;height:46.5px;background:#fff;border:1.5px solid #e3e3e3;border-radius:9px;box-sizing:border-box;"></div>
<span class="t" style="left:915.0px;top:179.8px;font-size:24px;line-height:31px;color:#9a9a9a;letter-spacing:0.62px;-webkit-text-stroke:.3px #9a9a9a;">Add Channel</span>
<svg class="b" style="left:1088.5px;top:181.0px;" width="27" height="27" viewBox="0 0 24 24"><rect x="0.8" y="0.8" width="22.4" height="22.4" rx="5.2" fill="#676767"/><circle cx="11.6" cy="6.8" r="1.9" fill="#fff"/><path d="M8.6 10 H13.4 V16.6 H15.4 V19 H8.4 V16.6 H10.6 V12.4 H8.6 Z" fill="#fff" /></svg>
<span class="t" style="left:1124.5px;top:179.8px;font-size:24px;line-height:31px;color:#696969;letter-spacing:1.21px;-webkit-text-stroke:0.6px #696969;">Overview</span>
<div class="b" style="left:1254px;top:180px;width:1.5px;height:29px;background:#e4e4e4;"></div>
<svg class="b" style="left:1276.0px;top:181.0px;" width="27" height="27" viewBox="0 0 24 24"><rect x="0.8" y="0.8" width="22.4" height="22.4" rx="5.2" fill="#ab47c9"/><path d="M6.6 16.8 V15 M11.6 16.8 V11.4 M16.6 16.8 V7" fill="none" stroke="#fff" stroke-width="2.7" stroke-linecap="round" stroke-linejoin="round" /></svg>
<svg class="b" style="left:1296.0px;top:200.4px;" width="15.5" height="15.5" viewBox="0 0 24 24"><path d="M12 2.4 Q12.9 2.4 13.8 3 L20.6 7.4 Q22 8.4 22 10 V18 a4 4 0 0 1 -4 4 H6 a4 4 0 0 1 -4 -4 V10 Q2 8.4 3.4 7.4 L10.2 3 Q11.1 2.4 12 2.4 Z" fill="#fff" stroke="#fff" stroke-width="5" stroke-linejoin="round"/><path d="M12 2.4 Q12.9 2.4 13.8 3 L20.6 7.4 Q22 8.4 22 10 V18 a4 4 0 0 1 -4 4 H6 a4 4 0 0 1 -4 -4 V10 Q2 8.4 3.4 7.4 L10.2 3 Q11.1 2.4 12 2.4 Z" fill="#5a5a5a" /><path d="M7.8 14.4 Q12 18 16.2 14.4" fill="none" stroke="#fff" stroke-width="2.4" stroke-linecap="round" stroke-linejoin="round" /></svg>
<span class="t" style="left:1313.0px;top:179.8px;font-size:24px;line-height:31px;color:#242424;letter-spacing:1.15px;-webkit-text-stroke:0.7px #242424;">Client Management</span>
<div class="b" style="left:1268px;top:227.5px;width:281px;height:4.0px;background:#1f1f1f;border-radius:1px;"></div>
<svg class="b" style="left:1560.7px;top:180.4px;" width="27.6" height="27.6" viewBox="0 0 24 24"><rect x="0.8" y="1" width="22.4" height="22" rx="5.2" fill="#8a8a8a"/><rect x="4.6" y="5.2" width="3.4" height="3" rx=".8" fill="#fff"/><rect x="10" y="5.2" width="9.6" height="3" rx=".8" fill="#fff"/><rect x="4.6" y="10.5" width="3.4" height="3" rx=".8" fill="#fff"/><rect x="10" y="10.5" width="9.6" height="3" rx=".8" fill="#fff"/><rect x="4.6" y="15.8" width="3.4" height="3" rx=".8" fill="#fff"/><rect x="10" y="15.8" width="9.6" height="3" rx=".8" fill="#fff"/></svg>
<svg class="b" style="left:1550.8px;top:170.8px;" width="19.5" height="19.5" viewBox="0 0 24 24"><g transform="rotate(42 12 12)" fill="#fff" stroke="#fff" stroke-width="5.2" stroke-linejoin="round"><rect x="7" y="1" width="10" height="3.4" rx="1.2"/><path d="M8.6 4 H15.4 L16.6 11 H7.4 Z"/><path d="M4.4 14.2 Q4.6 10.6 8 10.4 H16 Q19.4 10.6 19.6 14.2 Q19.6 15 18.8 15 H5.2 Q4.4 15 4.4 14.2 Z"/><path d="M11 14.8 H13 V21 L12 23.6 L11 21 Z"/></g><g transform="rotate(42 12 12)" fill="#808080"><rect x="7" y="1" width="10" height="3.4" rx="1.2"/><path d="M8.6 4 H15.4 L16.6 11 H7.4 Z"/><path d="M4.4 14.2 Q4.6 10.6 8 10.4 H16 Q19.4 10.6 19.6 14.2 Q19.6 15 18.8 15 H5.2 Q4.4 15 4.4 14.2 Z"/><path d="M11 14.8 H13 V21 L12 23.6 L11 21 Z"/></g></svg>
<span class="t" style="left:1597.0px;top:179.8px;font-size:24px;line-height:31px;color:#696969;letter-spacing:1.00px;-webkit-text-stroke:0.6px #696969;">By Client</span>
<svg class="b" style="left:1721.7px;top:180.4px;" width="27.6" height="27.6" viewBox="0 0 24 24"><rect x="0.8" y="1" width="22.4" height="22" rx="5.2" fill="#8a8a8a"/><rect x="4.6" y="5.2" width="3.4" height="3" rx=".8" fill="#fff"/><rect x="10" y="5.2" width="9.6" height="3" rx=".8" fill="#fff"/><rect x="4.6" y="10.5" width="3.4" height="3" rx=".8" fill="#fff"/><rect x="10" y="10.5" width="9.6" height="3" rx=".8" fill="#fff"/><rect x="4.6" y="15.8" width="3.4" height="3" rx=".8" fill="#fff"/><rect x="10" y="15.8" width="9.6" height="3" rx=".8" fill="#fff"/></svg>
<svg class="b" style="left:1711.8px;top:170.8px;" width="19.5" height="19.5" viewBox="0 0 24 24"><g transform="rotate(42 12 12)" fill="#fff" stroke="#fff" stroke-width="5.2" stroke-linejoin="round"><rect x="7" y="1" width="10" height="3.4" rx="1.2"/><path d="M8.6 4 H15.4 L16.6 11 H7.4 Z"/><path d="M4.4 14.2 Q4.6 10.6 8 10.4 H16 Q19.4 10.6 19.6 14.2 Q19.6 15 18.8 15 H5.2 Q4.4 15 4.4 14.2 Z"/><path d="M11 14.8 H13 V21 L12 23.6 L11 21 Z"/></g><g transform="rotate(42 12 12)" fill="#808080"><rect x="7" y="1" width="10" height="3.4" rx="1.2"/><path d="M8.6 4 H15.4 L16.6 11 H7.4 Z"/><path d="M4.4 14.2 Q4.6 10.6 8 10.4 H16 Q19.4 10.6 19.6 14.2 Q19.6 15 18.8 15 H5.2 Q4.4 15 4.4 14.2 Z"/><path d="M11 14.8 H13 V21 L12 23.6 L11 21 Z"/></g></svg>
<span class="t" style="left:1759.0px;top:179.8px;font-size:24px;line-height:31px;color:#696969;letter-spacing:0.91px;-webkit-text-stroke:0.6px #696969;">All Tasks</span>
<svg class="b" style="left:1882.2px;top:180.4px;" width="27.6" height="27.6" viewBox="0 0 24 24"><rect x="1" y="3.4" width="22" height="19.8" rx="5" fill="#f0690f"/><path d="M6.6 1.4 V5.2 M17.4 1.4 V5.2" fill="none" stroke="#f0690f" stroke-width="2.6" stroke-linecap="round" stroke-linejoin="round" /><text x="12" y="19.2" font-family="Liberation Sans, sans-serif" font-weight="700" font-size="11.6" text-anchor="middle" fill="#fff">31</text></svg>
<svg class="b" style="left:1872.2px;top:170.8px;" width="19.5" height="19.5" viewBox="0 0 24 24"><g transform="rotate(42 12 12)" fill="#fff" stroke="#fff" stroke-width="5.2" stroke-linejoin="round"><rect x="7" y="1" width="10" height="3.4" rx="1.2"/><path d="M8.6 4 H15.4 L16.6 11 H7.4 Z"/><path d="M4.4 14.2 Q4.6 10.6 8 10.4 H16 Q19.4 10.6 19.6 14.2 Q19.6 15 18.8 15 H5.2 Q4.4 15 4.4 14.2 Z"/><path d="M11 14.8 H13 V21 L12 23.6 L11 21 Z"/></g><g transform="rotate(42 12 12)" fill="#808080"><rect x="7" y="1" width="10" height="3.4" rx="1.2"/><path d="M8.6 4 H15.4 L16.6 11 H7.4 Z"/><path d="M4.4 14.2 Q4.6 10.6 8 10.4 H16 Q19.4 10.6 19.6 14.2 Q19.6 15 18.8 15 H5.2 Q4.4 15 4.4 14.2 Z"/><path d="M11 14.8 H13 V21 L12 23.6 L11 21 Z"/></g></svg>
<span class="t" style="left:1918.0px;top:179.8px;font-size:24px;line-height:31px;color:#696969;letter-spacing:1.09px;-webkit-text-stroke:0.6px #696969;">Calendar</span>
<div class="b" style="left:2048.5px;top:179.5px;width:1.5px;height:30.0px;background:#e4e4e4;"></div>
<svg class="b" style="left:2075.5px;top:183.0px;" width="24" height="24" viewBox="0 0 24 24"><path d="M12 3.5 V20.5 M3.5 12 H20.5" fill="none" stroke="#5f5f5f" stroke-width="2.0" stroke-linecap="round" stroke-linejoin="round" /></svg>
<span class="t" style="left:2112.5px;top:179.8px;font-size:24px;line-height:31px;color:#696969;letter-spacing:0.97px;-webkit-text-stroke:0.6px #696969;">View</span>
<div class="b" style="left:896px;top:254.5px;width:136px;height:46.0px;background:#fff;border:1.5px solid #e9e9e9;border-radius:23.0px;box-sizing:border-box;"></div>
<svg class="b" style="left:909.5px;top:264.0px;" width="27" height="27" viewBox="0 0 24 24"><path d="M2.5 6 H21.5 M6 12 H18 M9.6 18 H14.4" fill="none" stroke="#6f6f6f" stroke-width="2.1" stroke-linecap="round" stroke-linejoin="round" /></svg>
<span class="t" style="left:948.5px;top:262.3px;font-size:24px;line-height:31px;color:#7a7a7a;letter-spacing:0.69px;-webkit-text-stroke:.3px #7a7a7a;">Filters</span>
<div class="b" style="left:1564.5px;top:254.5px;width:208.5px;height:46.0px;background:#fff;border:1.5px solid #e9e9e9;border-radius:23.0px;box-sizing:border-box;"></div>
<svg class="b" style="left:1578.5px;top:263.5px;" width="28" height="28" viewBox="0 0 24 24"><path d="M3.5 3.5 H20.5 V12 Q20.5 18.4 12 22 Q3.5 18.4 3.5 12 Z" fill="none" stroke="#6f6f6f" stroke-width="2.1" stroke-linecap="round" stroke-linejoin="round" /><path d="M7.8 11.6 L11 14.8 L17 8.4" fill="none" stroke="#6f6f6f" stroke-width="2.1" stroke-linecap="round" stroke-linejoin="round" /></svg>
<span class="t" style="left:1617.5px;top:262.3px;font-size:24px;line-height:31px;color:#7a7a7a;letter-spacing:1.03px;-webkit-text-stroke:.3px #7a7a7a;">Protect view</span>
<div class="b" style="left:1782px;top:254.5px;width:277px;height:46.0px;background:#fff;border:1.5px solid #e9e9e9;border-radius:23.0px;box-sizing:border-box;"></div>
<svg class="b" style="left:1796.5px;top:264.0px;" width="27" height="27" viewBox="0 0 24 24"><path d="M20.4 9.2 A9 9 0 0 0 4.2 8 M3.6 14.8 A9 9 0 0 0 19.8 16" fill="none" stroke="#6f6f6f" stroke-width="2.2" stroke-linecap="round" stroke-linejoin="round" /><path d="M20.8 3.6 V9.4 H15 M3.2 20.4 V14.6 H9" fill="none" stroke="#6f6f6f" stroke-width="2.2" stroke-linecap="round" stroke-linejoin="round" /></svg>
<span class="t" style="left:1835.0px;top:262.3px;font-size:24px;line-height:31px;color:#7a7a7a;letter-spacing:0.62px;-webkit-text-stroke:.3px #7a7a7a;">Refreshed: Sep 22</span>
<div class="b" style="left:2066.5px;top:254.5px;width:256.5px;height:46.0px;background:#eeecfc;border:1.5px solid #d8d4f7;border-radius:23.0px;box-sizing:border-box;"></div>
<svg class="b" style="left:2082.5px;top:264.0px;" width="27" height="27" viewBox="0 0 24 24"><circle cx="12" cy="12" r="9.6" fill="none" stroke="#4f3bc6" stroke-width="2.2"/><path d="M12 6.8 V12 H7.6" fill="none" stroke="#4f3bc6" stroke-width="2.2" stroke-linecap="round" stroke-linejoin="round" /></svg>
<span class="t" style="left:2121.0px;top:262.3px;font-size:24px;line-height:31px;color:#4f3bc6;letter-spacing:0.83px;-webkit-text-stroke:.3px #4f3bc6;">Auto refresh: On</span>
<div class="b" style="left:2332px;top:254.5px;width:253px;height:46.0px;background:#fff;border:1.5px solid #e9e9e9;border-radius:23.0px;box-sizing:border-box;"></div>
<svg class="b" style="left:2347.5px;top:262.5px;" width="29" height="29" viewBox="0 0 24 24"><path d="M21 9.5 V5.2 a2.2 2.2 0 0 0 -2.2 -2.2 H5.2 A2.2 2.2 0 0 0 3 5.2 V18.8 a2.2 2.2 0 0 0 2.2 2.2 H11" fill="none" stroke="#6f6f6f" stroke-width="2.2" stroke-linecap="round" stroke-linejoin="round" /><path d="M7.6 12.4 V16.4 M11 9.6 V16.4 M14.4 8 V12" fill="none" stroke="#6f6f6f" stroke-width="2.0" stroke-linecap="round" stroke-linejoin="round" /><path d="M19.6 9.4 L13.4 17.2 H17.2 L15.8 23.6 L22.6 15.2 H18.6 Z" fill="#f7a823" /></svg>
<span class="t" style="left:2387.0px;top:261.8px;font-size:24px;line-height:31px;color:#7a7a7a;letter-spacing:1.00px;-webkit-text-stroke:.3px #7a7a7a;">Schedule report</span>
<span class="t" style="left:2610.0px;top:262.3px;font-size:24px;line-height:31px;color:#555;letter-spacing:0.83px;-webkit-text-stroke:.3px #555;">Customize</span>
<div class="b" style="left:2762px;top:262px;width:1.5px;height:30px;background:#e6e6e6;"></div>
<div class="b" style="left:2777px;top:253.5px;width:127.5px;height:47.5px;background:#5a43d6;border-radius:11px;"></div>
<span class="t" style="left:2790.0px;top:262.3px;font-size:24px;line-height:31px;color:#fff;letter-spacing:0.78px;-webkit-text-stroke:.35px #fff;">Add card</span>
<div class="b" style="left:892.5px;top:355.5px;width:2012.5px;height:287.5px;background:#fff;border:1.5px solid #ebebeb;border-radius:20px;box-sizing:border-box;"></div>
<svg class="b" style="left:1686.6px;top:497px;" width="57" height="39" viewBox="-0.5 -0.5 57 39"><defs><linearGradient id="hsg" x1="0" y1="0" x2="0.35" y2="1"><stop offset="0" stop-color="#fbc530"/><stop offset=".55" stop-color="#fdd04a"/><stop offset="1" stop-color="#f2b21f"/></linearGradient><filter id="hsb" x="-5%" y="-5%" width="110%" height="110%"><feGaussianBlur stdDeviation="0.5"/></filter></defs><g filter="url(#hsb)"><path d="M0.8 5.2 Q1.6 1.6 5.6 0.9 L16.2 2.6 Q19.4 0.2 22.8 0.1 Q27 0.2 30.6 1.7 L40.2 5.2 Q43.6 3 46.6 3.2 L50.8 4.4 Q54.6 8 55.8 13 Q54.2 16.6 50.8 18.8 L45.6 24.4 L40.4 30.8 Q36.6 33.6 32.6 35.4 Q30.4 37.6 28.4 37.2 Q25.4 37.6 22.6 36 Q19 34.6 16.6 32 Q13.6 29.6 11.8 26.4 L7.8 18.8 Q3.4 16 0.8 12.2 Q0.2 8.6 0.8 5.2 Z" fill="url(#hsg)"/><path d="M0.8 5.4 Q2 1.6 5.6 1 L15.6 2.6 L13 15 L7.8 18.6 Q3.4 15.8 0.8 12.2 Z" fill="#f7bb27"/><path d="M50.8 4.6 Q54.6 8 55.8 13 Q54.2 16.6 50.8 18.8 L47.8 21.6 L42 11 L44.6 3.6 Z" fill="#f3b41f"/><path d="M24.6 7.6 L48 19 L45.6 24.4 L40.4 30.8 L36 33.6 Q42.6 24.6 44.4 20.4 L24 10.2 Z" fill="#e09c14" fill-opacity=".75"/><path d="M16.7 2.6 Q16.2 7 17.6 9.8 Q21 10.4 24.6 7.6" fill="none" stroke="#d99614" stroke-width="1.5" stroke-linecap="round" stroke-linejoin="round" /><path d="M32.5 17.2 L43.6 21.4 M30.6 22.2 L40.4 26.6 M27.8 26.8 L36.4 31.2" fill="none" stroke="#e3a019" stroke-width="1.5" stroke-linecap="round" stroke-linejoin="round" /><path d="M12.4 27.4 Q15 27 16.4 31.6 Q19.6 31 20.8 34.8 Q24 34.2 25.4 36.6 Q28 35.2 29.6 36.4" fill="none" stroke="#dc9a16" stroke-width="1.4" stroke-linecap="round" stroke-linejoin="round" /></g></svg>
<span class="t" style="left:1759.0px;top:481.1px;font-size:52.5px;line-height:68px;color:#232323;letter-spacing:0.35px;font-weight:700;-webkit-text-stroke:0;">Meetings Hub</span>
<div class="b" style="left:892.5px;top:673.5px;width:2012.5px;height:1074px;overflow:hidden;"><div class="b" style="left:0;top:0;width:2012.5px;height:1200px;background:#fff;border:1.5px solid #ebebeb;border-radius:20px;box-sizing:border-box;"></div></div>
<span class="t" style="left:929.0px;top:703.4px;font-size:31.3px;line-height:41px;color:#232323;letter-spacing:0.18px;font-weight:700;-webkit-text-stroke:0;">Meetings This Month</span>
<div class="b" style="left:894.5px;top:754px;width:1997px;height:993.5px;overflow:hidden;"><div class="b" style="left:0;top:0;width:1997px;height:1100px;background:#fff;border:1.5px solid #e6e6e6;border-radius:12px 12px 0 0;box-sizing:border-box;"></div></div>
<svg class="b" style="left:927px;top:786.5px;" width="28" height="28" viewBox="0 0 36 36"><defs><clipPath id="g4"><rect x="0" y="0" width="36" height="36" rx="9.00"/></clipPath></defs><g clip-path="url(#g4)"><rect width="36" height="36" fill="#8b55fb"/><path d="M0 0 H36 V22 Q30 25.5 24 22.6 Q18 19.6 12 22.6 Q6 25.4 0 22 Z" fill="#fe2c6b"/><path d="M7 0 H36 V12.4 Q30 14.6 25.4 12 Q20 9 15.2 10.6 Q9.4 12 8.6 6.6 Q8.4 3 7 0 Z" fill="#ffa12f"/><path d="M18 7.2 L27.6 27.2 L18 22.2 L8.4 27.2 Z" fill="#fff"/></g></svg>
<span class="t" style="left:965.0px;top:782.8px;font-size:28px;line-height:36px;color:#6a6a6a;letter-spacing:0.23px;">WDA Client Management</span>
<span class="t" style="left:1298.0px;top:782.8px;font-size:28px;line-height:36px;color:#c2c2c2;">/</span>
<svg class="b" style="left:1318.5px;top:785.5px;" width="29" height="29" viewBox="0 0 24 24"><path d="M2.8 18.5 V6 a2 2 0 0 1 2 -2 H9 l2.4 2.6 H19 a2 2 0 0 1 2 2 V18.5 a2 2 0 0 1 -2 2 H4.8 a2 2 0 0 1 -2 -2 Z M3 10.2 H21" fill="none" stroke="#6a6a6a" stroke-width="2.1" stroke-linecap="round" stroke-linejoin="round" /></svg>
<span class="t" style="left:1359.0px;top:782.8px;font-size:28px;line-height:36px;color:#6a6a6a;letter-spacing:0.15px;">All Clients</span>
<span class="t" style="left:1498.5px;top:782.8px;font-size:28px;line-height:36px;color:#c2c2c2;">/</span>
<svg class="b" style="left:1517.0px;top:786.5px;" width="28" height="28" viewBox="0 0 24 24"><g transform="translate(0 2.6) scale(0.923)"><path d="M0.9 0.6 L4 3.2 Q6 4.7 8 4.3 L12 3.5 L14 4.4 L20.5 3.3 Q21.6 3.2 22.4 2.6 L25.2 0.5 Q26 0.3 26 1.2 V12.4 L23.2 15.2 L15.8 20.6 Q13.2 22.2 10.6 20.4 L0.8 13.4 Q0.3 13 0.3 12.4 V1.2 Q0.3 0.3 0.9 0.6 Z" fill="#1e1e1e" /><path d="M11.8 3.6 Q8.2 7 9 9.8 Q10.6 12.8 13.4 11.4 L15.9 9.6 L21.8 16" fill="none" stroke="#fff" stroke-width="1.7" stroke-linecap="round" stroke-linejoin="round" /><path d="M15.9 9.6 Q18.4 9.2 21 10" fill="none" stroke="#fff" stroke-width="1.5" stroke-linecap="round" stroke-linejoin="round" /></g></svg>
<span class="t" style="left:1554.5px;top:782.8px;font-size:28px;line-height:36px;color:#232323;letter-spacing:1.00px;-webkit-text-stroke:.85px #232323;">All Meetings</span>
<svg class="b" style="left:1727.0px;top:791.5px;" width="20" height="20" viewBox="0 0 24 24"><path d="M5 8.5 L12 15.5 L19 8.5" fill="none" stroke="#777" stroke-width="2.4" stroke-linecap="round" stroke-linejoin="round" /></svg>
<svg class="b" style="left:1767.8px;top:785.5px;" width="29" height="29" viewBox="0 0 24 24"><path d="M12 2.8 L14.8 8.7 L21.2 9.5 L16.5 14 L17.8 20.4 L12 17.2 L6.2 20.4 L7.5 14 L2.8 9.5 L9.2 8.7 Z" fill="none" stroke="#4a4a4a" stroke-width="2.1" stroke-linecap="round" stroke-linejoin="round" /></svg>
<svg class="b" style="left:2369.0px;top:786.0px;" width="29" height="29" viewBox="0 0 24 24"><path d="M21.4 11.6 V10.2 A7.4 7.4 0 0 0 14 2.8 H10 A7.4 7.4 0 0 0 2.6 10.2 V13.8 A7.4 7.4 0 0 0 10 21.2 H12.4" fill="none" stroke="#666" stroke-width="2.1" stroke-linecap="round" stroke-linejoin="round" /><circle cx="8.8" cy="9.6" r="1.45" fill="#666"/><circle cx="15" cy="9.6" r="1.45" fill="#666"/><path d="M8.4 13.6 Q10.6 16.2 13.4 14.2" fill="none" stroke="#666" stroke-width="2.1" stroke-linecap="round" stroke-linejoin="round" /><path d="M18.8 12.6 L20.2 16.6 L24 18 L20.2 19.4 L18.8 23.4 L17.4 19.4 L13.6 18 L17.4 16.6 Z" fill="#666" /></svg>
<span class="t" style="left:2409.0px;top:782.8px;font-size:28px;line-height:36px;color:#5f5f5f;letter-spacing:0.57px;">Agents</span>
<svg class="b" style="left:2534.0px;top:786.5px;" width="28" height="28" viewBox="0 0 24 24"><path d="M15 0.6 Q15.8 0.4 15.6 1.4 L13.6 9 H19.6 Q20.8 9.2 20 10.2 L9.4 23.2 Q8.4 23.8 8.6 22.6 L10.6 14.4 H4.4 Q3.2 14.2 4 13.2 Z" fill="#f7a823" /></svg>
<span class="t" style="left:2573.0px;top:782.8px;font-size:28px;line-height:36px;color:#5f5f5f;">3</span>
<svg class="b" style="left:2623.0px;top:786.5px;" width="28" height="28" viewBox="0 0 24 24"><path d="M5.36 8.16 A3.95 3.95 0 0 1 12.00 4.33 A3.95 3.95 0 0 1 18.64 8.16 A3.95 3.95 0 0 1 18.64 15.84 A3.95 3.95 0 0 1 12.00 19.67 A3.95 3.95 0 0 1 5.36 15.84 A3.95 3.95 0 0 1 5.36 8.16 Z" fill="none" stroke="#666" stroke-width="2.0" stroke-linecap="round" stroke-linejoin="round" /><path d="M12 7.9 L13.2 10.8 L16.1 12 L13.2 13.2 L12 16.1 L10.8 13.2 L7.9 12 L10.8 10.8 Z" fill="#666" /></svg>
<span class="t" style="left:2662.0px;top:782.8px;font-size:28px;line-height:36px;color:#5f5f5f;letter-spacing:0.16px;">Ask</span>
<svg class="b" style="left:2743.0px;top:786.0px;" width="29" height="29" viewBox="0 0 24 24"><path d="M9.2 12.4 a4.4 4.4 0 1 0 0 -8.8 a4.4 4.4 0 0 0 0 8.8 Z M2.2 20.8 Q2.2 14.6 9.2 14.4 Q16.2 14.6 16.2 20.8 Z" fill="none" stroke="#666" stroke-width="2.1" stroke-linecap="round" stroke-linejoin="round" /><path d="M13.4 2.9 a4.3 4.3 0 0 1 5.2 6.2 Q20.6 9.4 20.4 11.4 Q19 12.4 17.6 12.2 M17.8 14.6 Q21.8 15.4 21.8 19.2" fill="none" stroke="#666" stroke-width="2.1" stroke-linecap="round" stroke-linejoin="round" /></svg>
<span class="t" style="left:2782.0px;top:782.8px;font-size:28px;line-height:36px;color:#5f5f5f;letter-spacing:0.07px;">Share</span>
<div class="b" style="left:928px;top:844px;width:169px;height:45.5px;background:#fff;border:1.5px solid #e3e3e3;border-radius:9px;box-sizing:border-box;"></div>
<span class="t" style="left:941.0px;top:852.3px;font-size:24px;line-height:31px;color:#9a9a9a;letter-spacing:0.62px;-webkit-text-stroke:.3px #9a9a9a;">Add Channel</span>
<div class="b" style="left:1114px;top:852px;width:1.5px;height:30px;background:#e4e4e4;"></div>
<svg class="b" style="left:1136.7px;top:852.9px;" width="27.6" height="27.6" viewBox="0 0 24 24"><rect x="0.8" y="1" width="22.4" height="22" rx="5.2" fill="#8a8a8a"/><rect x="4.6" y="5.2" width="3.4" height="3" rx=".8" fill="#fff"/><rect x="10" y="5.2" width="9.6" height="3" rx=".8" fill="#fff"/><rect x="4.6" y="10.5" width="3.4" height="3" rx=".8" fill="#fff"/><rect x="10" y="10.5" width="9.6" height="3" rx=".8" fill="#fff"/><rect x="4.6" y="15.8" width="3.4" height="3" rx=".8" fill="#fff"/><rect x="10" y="15.8" width="9.6" height="3" rx=".8" fill="#fff"/></svg>
<svg class="b" style="left:1126.8px;top:843.2px;" width="19.5" height="19.5" viewBox="0 0 24 24"><g transform="rotate(42 12 12)" fill="#fff" stroke="#fff" stroke-width="5.2" stroke-linejoin="round"><rect x="7" y="1" width="10" height="3.4" rx="1.2"/><path d="M8.6 4 H15.4 L16.6 11 H7.4 Z"/><path d="M4.4 14.2 Q4.6 10.6 8 10.4 H16 Q19.4 10.6 19.6 14.2 Q19.6 15 18.8 15 H5.2 Q4.4 15 4.4 14.2 Z"/><path d="M11 14.8 H13 V21 L12 23.6 L11 21 Z"/></g><g transform="rotate(42 12 12)" fill="#808080"><rect x="7" y="1" width="10" height="3.4" rx="1.2"/><path d="M8.6 4 H15.4 L16.6 11 H7.4 Z"/><path d="M4.4 14.2 Q4.6 10.6 8 10.4 H16 Q19.4 10.6 19.6 14.2 Q19.6 15 18.8 15 H5.2 Q4.4 15 4.4 14.2 Z"/><path d="M11 14.8 H13 V21 L12 23.6 L11 21 Z"/></g></svg>
<svg class="b" style="left:1156.8px;top:873.2px;" width="15.5" height="15.5" viewBox="0 0 24 24"><path d="M12 2.4 Q12.9 2.4 13.8 3 L20.6 7.4 Q22 8.4 22 10 V18 a4 4 0 0 1 -4 4 H6 a4 4 0 0 1 -4 -4 V10 Q2 8.4 3.4 7.4 L10.2 3 Q11.1 2.4 12 2.4 Z" fill="#fff" stroke="#fff" stroke-width="5" stroke-linejoin="round"/><path d="M12 2.4 Q12.9 2.4 13.8 3 L20.6 7.4 Q22 8.4 22 10 V18 a4 4 0 0 1 -4 4 H6 a4 4 0 0 1 -4 -4 V10 Q2 8.4 3.4 7.4 L10.2 3 Q11.1 2.4 12 2.4 Z" fill="#5a5a5a" /><path d="M7.8 14.4 Q12 18 16.2 14.4" fill="none" stroke="#fff" stroke-width="2.4" stroke-linecap="round" stroke-linejoin="round" /></svg>
<span class="t" style="left:1173.0px;top:852.3px;font-size:24px;line-height:31px;color:#696969;letter-spacing:1.12px;-webkit-text-stroke:0.6px #696969;">All Meetings</span>
<svg class="b" style="left:1337.2px;top:852.9px;" width="27.6" height="27.6" viewBox="0 0 24 24"><rect x="0.8" y="1" width="22.4" height="22" rx="5.2" fill="#8a8a8a"/><rect x="4.6" y="5.2" width="3.4" height="3" rx=".8" fill="#fff"/><rect x="10" y="5.2" width="9.6" height="3" rx=".8" fill="#fff"/><rect x="4.6" y="10.5" width="3.4" height="3" rx=".8" fill="#fff"/><rect x="10" y="10.5" width="9.6" height="3" rx=".8" fill="#fff"/><rect x="4.6" y="15.8" width="3.4" height="3" rx=".8" fill="#fff"/><rect x="10" y="15.8" width="9.6" height="3" rx=".8" fill="#fff"/></svg>
<svg class="b" style="left:1327.2px;top:843.2px;" width="19.5" height="19.5" viewBox="0 0 24 24"><g transform="rotate(42 12 12)" fill="#fff" stroke="#fff" stroke-width="5.2" stroke-linejoin="round"><rect x="7" y="1" width="10" height="3.4" rx="1.2"/><path d="M8.6 4 H15.4 L16.6 11 H7.4 Z"/><path d="M4.4 14.2 Q4.6 10.6 8 10.4 H16 Q19.4 10.6 19.6 14.2 Q19.6 15 18.8 15 H5.2 Q4.4 15 4.4 14.2 Z"/><path d="M11 14.8 H13 V21 L12 23.6 L11 21 Z"/></g><g transform="rotate(42 12 12)" fill="#808080"><rect x="7" y="1" width="10" height="3.4" rx="1.2"/><path d="M8.6 4 H15.4 L16.6 11 H7.4 Z"/><path d="M4.4 14.2 Q4.6 10.6 8 10.4 H16 Q19.4 10.6 19.6 14.2 Q19.6 15 18.8 15 H5.2 Q4.4 15 4.4 14.2 Z"/><path d="M11 14.8 H13 V21 L12 23.6 L11 21 Z"/></g></svg>
<span class="t" style="left:1374.0px;top:852.3px;font-size:24px;line-height:31px;color:#696969;letter-spacing:0.99px;-webkit-text-stroke:0.6px #696969;">Me Mode</span>
<svg class="b" style="left:1500.7px;top:852.9px;" width="27.6" height="27.6" viewBox="0 0 24 24"><rect x="1" y="3.4" width="22" height="19.8" rx="5" fill="#f0690f"/><path d="M6.6 1.4 V5.2 M17.4 1.4 V5.2" fill="none" stroke="#f0690f" stroke-width="2.6" stroke-linecap="round" stroke-linejoin="round" /><text x="12" y="19.2" font-family="Liberation Sans, sans-serif" font-weight="700" font-size="11.6" text-anchor="middle" fill="#fff">31</text></svg>
<svg class="b" style="left:1490.8px;top:843.2px;" width="19.5" height="19.5" viewBox="0 0 24 24"><g transform="rotate(42 12 12)" fill="#fff" stroke="#fff" stroke-width="5.2" stroke-linejoin="round"><rect x="7" y="1" width="10" height="3.4" rx="1.2"/><path d="M8.6 4 H15.4 L16.6 11 H7.4 Z"/><path d="M4.4 14.2 Q4.6 10.6 8 10.4 H16 Q19.4 10.6 19.6 14.2 Q19.6 15 18.8 15 H5.2 Q4.4 15 4.4 14.2 Z"/><path d="M11 14.8 H13 V21 L12 23.6 L11 21 Z"/></g><g transform="rotate(42 12 12)" fill="#808080"><rect x="7" y="1" width="10" height="3.4" rx="1.2"/><path d="M8.6 4 H15.4 L16.6 11 H7.4 Z"/><path d="M4.4 14.2 Q4.6 10.6 8 10.4 H16 Q19.4 10.6 19.6 14.2 Q19.6 15 18.8 15 H5.2 Q4.4 15 4.4 14.2 Z"/><path d="M11 14.8 H13 V21 L12 23.6 L11 21 Z"/></g></svg>
<span class="t" style="left:1538.0px;top:852.3px;font-size:24px;line-height:31px;color:#242424;letter-spacing:0.94px;-webkit-text-stroke:0.7px #242424;">Calendar</span>
<div class="b" style="left:1493px;top:899.5px;width:157.5px;height:4.0px;background:#1f1f1f;border-radius:1px;"></div>
<svg class="b" style="left:1662.7px;top:852.9px;" width="27.6" height="27.6" viewBox="0 0 24 24"><rect x="0.8" y="1" width="22.4" height="22" rx="5.2" fill="#3fb57c"/><rect x="4.6" y="5.2" width="3.4" height="3" rx=".8" fill="#fff"/><rect x="10" y="5.2" width="9.6" height="3" rx=".8" fill="#fff"/><rect x="4.6" y="10.5" width="3.4" height="3" rx=".8" fill="#fff"/><rect x="10" y="10.5" width="9.6" height="3" rx=".8" fill="#fff"/><rect x="4.6" y="15.8" width="3.4" height="3" rx=".8" fill="#fff"/><rect x="10" y="15.8" width="9.6" height="3" rx=".8" fill="#fff"/></svg>
<svg class="b" style="left:1652.8px;top:843.2px;" width="19.5" height="19.5" viewBox="0 0 24 24"><g transform="rotate(42 12 12)" fill="#fff" stroke="#fff" stroke-width="5.2" stroke-linejoin="round"><rect x="7" y="1" width="10" height="3.4" rx="1.2"/><path d="M8.6 4 H15.4 L16.6 11 H7.4 Z"/><path d="M4.4 14.2 Q4.6 10.6 8 10.4 H16 Q19.4 10.6 19.6 14.2 Q19.6 15 18.8 15 H5.2 Q4.4 15 4.4 14.2 Z"/><path d="M11 14.8 H13 V21 L12 23.6 L11 21 Z"/></g><g transform="rotate(42 12 12)" fill="#808080"><rect x="7" y="1" width="10" height="3.4" rx="1.2"/><path d="M8.6 4 H15.4 L16.6 11 H7.4 Z"/><path d="M4.4 14.2 Q4.6 10.6 8 10.4 H16 Q19.4 10.6 19.6 14.2 Q19.6 15 18.8 15 H5.2 Q4.4 15 4.4 14.2 Z"/><path d="M11 14.8 H13 V21 L12 23.6 L11 21 Z"/></g></svg>
<span class="t" style="left:1699.5px;top:852.3px;font-size:24px;line-height:31px;color:#696969;letter-spacing:1.30px;-webkit-text-stroke:0.6px #696969;">Summary</span>
<svg class="b" style="left:1830.5px;top:853.5px;" width="27" height="27" viewBox="0 0 24 24"><rect x="0.8" y="1" width="22.4" height="22" rx="5.2" fill="#8a8a8a"/><rect x="4.6" y="5.2" width="3.4" height="3" rx=".8" fill="#fff"/><rect x="10" y="5.2" width="9.6" height="3" rx=".8" fill="#fff"/><rect x="4.6" y="10.5" width="3.4" height="3" rx=".8" fill="#fff"/><rect x="10" y="10.5" width="9.6" height="3" rx=".8" fill="#fff"/><rect x="4.6" y="15.8" width="3.4" height="3" rx=".8" fill="#fff"/><rect x="10" y="15.8" width="9.6" height="3" rx=".8" fill="#fff"/></svg>
<span class="t" style="left:1868.0px;top:852.3px;font-size:24px;line-height:31px;color:#696969;letter-spacing:1.16px;-webkit-text-stroke:0.6px #696969;">Archive</span>
<div class="b" style="left:1980.5px;top:852px;width:1.5px;height:30px;background:#e4e4e4;"></div>
<svg class="b" style="left:2007.5px;top:855.5px;" width="24" height="24" viewBox="0 0 24 24"><path d="M12 3.5 V20.5 M3.5 12 H20.5" fill="none" stroke="#5f5f5f" stroke-width="2.0" stroke-linecap="round" stroke-linejoin="round" /></svg>
<span class="t" style="left:2045.0px;top:852.3px;font-size:24px;line-height:31px;color:#696969;letter-spacing:0.97px;-webkit-text-stroke:0.6px #696969;">View</span>
<div class="b" style="left:896px;top:902px;width:1995px;height:1.5px;background:#e8e8e8;"></div>
<div class="b" style="left:1493px;top:899.5px;width:157.5px;height:4.0px;background:#1f1f1f;border-radius:1px;"></div>
<div class="b" style="left:920.5px;top:920.5px;width:98.5px;height:46.5px;background:#fff;border:1.5px solid #e4e4e4;border-radius:11px;box-sizing:border-box;"></div>
<span class="t" style="left:936.5px;top:928.8px;font-size:24px;line-height:31px;color:#666;letter-spacing:0.74px;-webkit-text-stroke:.3px #666;">Today</span>
<div class="b" style="left:1029px;top:920.5px;width:139.5px;height:46.5px;background:#fff;border:1.5px solid #e4e4e4;border-radius:11px;box-sizing:border-box;"></div>
<span class="t" style="left:1045.5px;top:928.8px;font-size:24px;line-height:31px;color:#666;letter-spacing:1.07px;-webkit-text-stroke:.3px #666;">Month</span>
<svg class="b" style="left:1130.3px;top:935.0px;" width="20" height="20" viewBox="0 0 24 24"><path d="M5 8.5 L12 15.5 L19 8.5" fill="none" stroke="#5a5a5a" stroke-width="2.4" stroke-linecap="round" stroke-linejoin="round" /></svg>
<svg class="b" style="left:1189.0px;top:931.5px;" width="24" height="24" viewBox="0 0 24 24"><path d="M15 5 L8 12 L15 19" fill="none" stroke="#555" stroke-width="2.3" stroke-linecap="round" stroke-linejoin="round" /></svg>
<svg class="b" style="left:1238.5px;top:931.5px;" width="24" height="24" viewBox="0 0 24 24"><path d="M9 5 L16 12 L9 19" fill="none" stroke="#555" stroke-width="2.3" stroke-linecap="round" stroke-linejoin="round" /></svg>
<span class="t" style="left:1290.0px;top:926.3px;font-size:28px;line-height:36px;color:#666;letter-spacing:1.04px;">September 2025</span>
<div class="b" style="left:2053.5px;top:920.5px;width:121.0px;height:46.5px;background:#fff;border:1.5px solid #e9e9e9;border-radius:23.25px;box-sizing:border-box;"></div>
<svg class="b" style="left:2067.5px;top:931.0px;" width="26" height="26" viewBox="0 0 24 24"><path d="M2.5 6 H21.5 M6 12 H18 M9.6 18 H14.4" fill="none" stroke="#6f6f6f" stroke-width="2.1" stroke-linecap="round" stroke-linejoin="round" /></svg>
<span class="t" style="left:2103.5px;top:928.8px;font-size:24px;line-height:31px;color:#7a7a7a;letter-spacing:0.73px;-webkit-text-stroke:.3px #7a7a7a;">Filter</span>
<div class="b" style="left:2184px;top:920.5px;width:142px;height:46.5px;background:#fff;border:1.5px solid #e9e9e9;border-radius:23.25px;box-sizing:border-box;"></div>
<svg class="b" style="left:2198.0px;top:931.0px;" width="26" height="26" viewBox="0 0 24 24"><circle cx="12" cy="12" r="9.6" fill="none" stroke="#6f6f6f" stroke-width="2.1"/><path d="M7.6 12.2 L10.8 15.4 L16.8 9" fill="none" stroke="#6f6f6f" stroke-width="2.1" stroke-linecap="round" stroke-linejoin="round" /></svg>
<span class="t" style="left:2234.5px;top:928.8px;font-size:24px;line-height:31px;color:#7a7a7a;letter-spacing:0.56px;-webkit-text-stroke:.3px #7a7a7a;">Closed</span>
<div class="b" style="left:2335.5px;top:920.5px;width:167.0px;height:46.5px;background:#fff;border:1.5px solid #e9e9e9;border-radius:23.25px;box-sizing:border-box;"></div>
<svg class="b" style="left:2349.0px;top:931.0px;" width="26" height="26" viewBox="0 0 24 24"><path d="M9.2 12.4 a4.4 4.4 0 1 0 0 -8.8 a4.4 4.4 0 0 0 0 8.8 Z M2.2 20.8 Q2.2 14.6 9.2 14.4 Q16.2 14.6 16.2 20.8 Z" fill="none" stroke="#6f6f6f" stroke-width="2.1" stroke-linecap="round" stroke-linejoin="round" /><path d="M13.4 2.9 a4.3 4.3 0 0 1 5.2 6.2 Q20.6 9.4 20.4 11.4 Q19 12.4 17.6 12.2 M17.8 14.6 Q21.8 15.4 21.8 19.2" fill="none" stroke="#6f6f6f" stroke-width="2.1" stroke-linecap="round" stroke-linejoin="round" /></svg>
<span class="t" style="left:2386.5px;top:928.8px;font-size:24px;line-height:31px;color:#7a7a7a;letter-spacing:0.61px;-webkit-text-stroke:.3px #7a7a7a;">Assignee</span>
<svg class="b" style="left:2512.7px;top:921.3px;" width="45" height="45" viewBox="0 0 48 48"><defs><clipPath id="g5"><circle cx="24" cy="24" r="24"/></clipPath><filter id="g6" x="-5%" y="-5%" width="110%" height="110%"><feGaussianBlur stdDeviation="0.55"/></filter></defs><g clip-path="url(#g5)"><rect width="48" height="48" fill="#050505"/><g filter="url(#g6)"><path d="M3 49 Q5 38.5 15.5 35.4 L23 38 L31 35.4 Q42 38 45 49 Z" fill="#e2e2e2"/><path d="M17.2 27 H29.2 V36.2 Q23.2 40.6 17.2 36.2 Z" fill="#9c9c9c"/><ellipse cx="23" cy="18.8" rx="10.2" ry="12.6" fill="#cdcdcd"/><path d="M12.4 14.6 Q11 2.4 22.6 1 Q34.6 1 33.8 14.4 Q32.4 8.4 27.4 8 Q23 9.4 18.6 8 Q13.8 8.6 12.4 14.6 Z" fill="#b2b2b2"/><ellipse cx="18.4" cy="14.6" rx="2.7" ry="1.25" fill="#5c5c5c"/><ellipse cx="27.6" cy="14.6" rx="2.7" ry="1.25" fill="#5c5c5c"/><path d="M22 16 Q21.4 19.6 23 20 Q24.6 19.6 24 16 Z" fill="#b0b0b0"/><path d="M16.6 21.6 Q23 27.6 29.6 21.6 Q23 23.6 16.6 21.6 Z" fill="#f7f7f7" stroke="#6e6e6e" stroke-width=".9"/><path d="M14 24 Q23 36 32 24 Q30 31 23 31.6 Q16 31 14 24 Z" fill="#bdbdbd"/></g></g><circle cx="24" cy="24" r="23.4" fill="none" stroke="#e2e2e2" stroke-width="1.2"/></svg>
<div class="b" style="left:2575px;top:929px;width:1.5px;height:30.5px;background:#e2e2e2;"></div>
<div class="b" style="left:2594px;top:920.5px;width:46px;height:46.5px;background:#fff;border:1.5px solid #cfcfcf;border-radius:11px;box-sizing:border-box;"></div>
<svg class="b" style="left:2602.5px;top:929.0px;" width="30" height="30" viewBox="0 0 24 24"><circle cx="10.5" cy="10.5" r="7.5" fill="none" stroke="#262626" stroke-width="2.2"/><path d="M16 16 L21.5 21.5" fill="none" stroke="#262626" stroke-width="2.2" stroke-linecap="round" stroke-linejoin="round" /></svg>
<div class="b" style="left:2649.5px;top:920.5px;width:47.0px;height:46.5px;background:#fff;border:1.5px solid #cfcfcf;border-radius:11px;box-sizing:border-box;"></div>
<svg class="b" style="left:2659.0px;top:929.8px;" width="28" height="28" viewBox="0 0 24 24"><path d="M10.68 1.89 L13.32 1.89 L13.80 4.31 L16.16 5.29 L18.22 3.91 L20.09 5.78 L18.71 7.84 L19.69 10.20 L22.11 10.68 L22.11 13.32 L19.69 13.80 L18.71 16.16 L20.09 18.22 L18.22 20.09 L16.16 18.71 L13.80 19.69 L13.32 22.11 L10.68 22.11 L10.20 19.69 L7.84 18.71 L5.78 20.09 L3.91 18.22 L5.29 16.16 L4.31 13.80 L1.89 13.32 L1.89 10.68 L4.31 10.20 L5.29 7.84 L3.91 5.78 L5.78 3.91 L7.84 5.29 L10.20 4.31 Z" fill="none" stroke="#4a4a4a" stroke-width="2.0" stroke-linecap="round" stroke-linejoin="round" /><circle cx="12" cy="12" r="3.3" fill="none" stroke="#4a4a4a" stroke-width="2.0"/></svg>
<div class="b" style="left:2704.5px;top:920px;width:170.0px;height:47.5px;background:#5a43d6;border-radius:11px;"></div>
<span class="t" style="left:2718.5px;top:928.8px;font-size:24px;line-height:31px;color:#fff;letter-spacing:0.60px;-webkit-text-stroke:.35px #fff;">Add Task</span>
<div class="b" style="left:2834.5px;top:920px;width:1.5px;height:47.5px;background:#4e39c0;"></div>
<svg class="b" style="left:2844.3px;top:935.0px;" width="20" height="20" viewBox="0 0 24 24"><path d="M5 8.5 L12 15.5 L19 8.5" fill="none" stroke="#fff" stroke-width="2.6" stroke-linecap="round" stroke-linejoin="round" /></svg>
<div class="b" style="left:896px;top:984.5px;width:1995px;height:1.5px;background:#e8e8e8;"></div>
<div class="b" style="left:896px;top:986px;width:272.79999999999995px;height:761.5px;background:#fdfdfd;"></div>
<div class="b" style="left:2537.8px;top:986px;width:273.8000000000002px;height:761.5px;background:#fdfdfd;"></div>
<div class="b" style="left:1168.05px;top:986px;width:1.5px;height:761.5px;background:#ebebeb;"></div>
<div class="b" style="left:1441.85px;top:986px;width:1.5px;height:761.5px;background:#ebebeb;"></div>
<div class="b" style="left:1715.65px;top:986px;width:1.5px;height:761.5px;background:#ebebeb;"></div>
<div class="b" style="left:1989.45px;top:986px;width:1.5px;height:761.5px;background:#ebebeb;"></div>
<div class="b" style="left:2263.25px;top:986px;width:1.5px;height:761.5px;background:#ebebeb;"></div>
<div class="b" style="left:2537.05px;top:986px;width:1.5px;height:761.5px;background:#ebebeb;"></div>
<div class="b" style="left:2810.85px;top:986px;width:1.5px;height:761.5px;background:#ebebeb;"></div>
<div class="b" style="left:896px;top:1324.25px;width:1915.6000000000004px;height:1.5px;background:#ebebeb;"></div>
<div class="b" style="left:896px;top:1606.25px;width:1915.6000000000004px;height:1.5px;background:#ebebeb;"></div>
<span class="t" style="left:916.0px;top:993.3px;font-size:26px;line-height:34px;color:#2b2b2b;letter-spacing:0.36px;-webkit-text-stroke:.35px #2b2b2b;">Sunday</span>
<span class="t" style="left:1189.8px;top:993.3px;font-size:26px;line-height:34px;color:#2b2b2b;letter-spacing:0.80px;-webkit-text-stroke:.35px #2b2b2b;">Monday</span>
<span class="t" style="left:1463.6px;top:993.3px;font-size:26px;line-height:34px;color:#2b2b2b;letter-spacing:0.37px;-webkit-text-stroke:.35px #2b2b2b;">Tuesday</span>
<span class="t" style="left:1737.4px;top:993.3px;font-size:26px;line-height:34px;color:#2b2b2b;letter-spacing:0.52px;-webkit-text-stroke:.35px #2b2b2b;">Wednesday</span>
<span class="t" style="left:2011.2px;top:993.3px;font-size:26px;line-height:34px;color:#2b2b2b;letter-spacing:0.80px;-webkit-text-stroke:.35px #2b2b2b;">Thursday</span>
<span class="t" style="left:2285.0px;top:993.3px;font-size:26px;line-height:34px;color:#2b2b2b;letter-spacing:0.35px;-webkit-text-stroke:.35px #2b2b2b;">Friday</span>
<span class="t" style="left:2558.8px;top:993.3px;font-size:26px;line-height:34px;color:#2b2b2b;letter-spacing:0.70px;-webkit-text-stroke:.35px #2b2b2b;">Saturday</span>
<span class="t" style="left:1124.7px;top:1288.3px;font-size:23px;line-height:30px;color:#a8a8a8;">31</span>
<span class="t" style="left:1411.3px;top:1288.3px;font-size:23px;line-height:30px;color:#5c5c5c;">1</span>
<span class="t" style="left:1685.1px;top:1288.3px;font-size:23px;line-height:30px;color:#5c5c5c;">2</span>
<span class="t" style="left:1958.9px;top:1288.3px;font-size:23px;line-height:30px;color:#5c5c5c;">3</span>
<span class="t" style="left:2232.7px;top:1288.3px;font-size:23px;line-height:30px;color:#5c5c5c;">4</span>
<span class="t" style="left:2506.5px;top:1288.3px;font-size:23px;line-height:30px;color:#5c5c5c;">5</span>
<span class="t" style="left:2780.3px;top:1288.3px;font-size:23px;line-height:30px;color:#9d9d9d;">6</span>
<span class="t" style="left:1137.5px;top:1570.3px;font-size:23px;line-height:30px;color:#9d9d9d;">7</span>
<span class="t" style="left:1411.3px;top:1570.3px;font-size:23px;line-height:30px;color:#5c5c5c;">8</span>
<span class="t" style="left:1685.1px;top:1570.3px;font-size:23px;line-height:30px;color:#5c5c5c;">9</span>
<span class="t" style="left:1946.1px;top:1570.3px;font-size:23px;line-height:30px;color:#5c5c5c;">10</span>
<span class="t" style="left:2221.6px;top:1570.3px;font-size:23px;line-height:30px;color:#5c5c5c;">11</span>
<span class="t" style="left:2493.7px;top:1570.3px;font-size:23px;line-height:30px;color:#5c5c5c;">12</span>
<span class="t" style="left:2767.5px;top:1570.3px;font-size:23px;line-height:30px;color:#9d9d9d;">13</span>
<svg class="b" style="left:2836.7px;top:1016.0px;" width="30" height="30" viewBox="0 0 24 24"><path d="M2 4.4 H22 M2 12 H22 M2 19.6 H14" fill="none" stroke="#c4c4c4" stroke-width="2.6" stroke-linecap="round" stroke-linejoin="round" /></svg>
<div class="b" style="left:2835px;top:1279.5px;width:32px;height:1.5px;background:#d9d9d9;"></div>
<div class="b" style="left:2852px;top:1247.5px;width:0;height:0;"><div class="rot" style="font-size:24.5px;color:#6b6b6b;letter-spacing:1.05px;"><b style="color:#2a2a2a">8</b> Unscheduled</div></div>
<div class="b" style="left:2852px;top:1426px;width:0;height:0;"><div class="rot" style="font-size:24px;color:#6b6b6b;letter-spacing:.45px;"><span style="color:#e0483a;-webkit-text-stroke:.5px #e0483a">1</span> Overdue</div></div>
<div class="b" style="left:2275px;top:1620.5px;width:253px;height:127px;overflow:hidden;"><div class="b" style="left:0;top:0;width:253px;height:160px;background:#e6e8ea;border-radius:5px;border-left:6.5px solid #b3b3b3;box-sizing:border-box;"></div></div>
<svg class="b" style="left:2288.5px;top:1633.5px;" width="27" height="27" viewBox="0 0 24 24"><g transform="translate(0 2.6) scale(0.923)"><path d="M0.9 0.6 L4 3.2 Q6 4.7 8 4.3 L12 3.5 L14 4.4 L20.5 3.3 Q21.6 3.2 22.4 2.6 L25.2 0.5 Q26 0.3 26 1.2 V12.4 L23.2 15.2 L15.8 20.6 Q13.2 22.2 10.6 20.4 L0.8 13.4 Q0.3 13 0.3 12.4 V1.2 Q0.3 0.3 0.9 0.6 Z" fill="#a9a9a9" /><path d="M11.8 3.6 Q8.2 7 9 9.8 Q10.6 12.8 13.4 11.4 L15.9 9.6 L21.8 16" fill="none" stroke="#e6e8ea" stroke-width="1.7" stroke-linecap="round" stroke-linejoin="round" /><path d="M15.9 9.6 Q18.4 9.2 21 10" fill="none" stroke="#e6e8ea" stroke-width="1.5" stroke-linecap="round" stroke-linejoin="round" /></g></svg>
<span class="t" style="left:2329.0px;top:1633.3px;font-size:23px;line-height:30px;color:#6f6f6f;letter-spacing:1.03px;">[Frequency] Mee</span>
<div class="b" style="left:2490px;top:1626px;width:38px;height:44px;background:linear-gradient(90deg,rgba(230,232,234,0),#e6e8ea 75%);"></div>
<span class="t" style="left:2290.0px;top:1671.8px;font-size:23px;line-height:30px;color:#6f6f6f;letter-spacing:0.92px;">Client:  Client A</span>
<svg class="b" style="left:2290.5px;top:1713.0px;" width="21" height="21" viewBox="0 0 24 24"><path d="M3.6 22.6 V2.6 Q3.6 1.6 4.8 1.6 Q9 0.4 12.4 2.2 Q16 4 20.4 2.4 V13.6 Q16 15.4 12.4 13.6 Q9 12 5.8 13 V22.6 Z" fill="#6b80e8" /></svg>
<svg class="b" style="left:2476px;top:1703px" width="44" height="44" viewBox="0 0 44 44"><circle cx="21" cy="21" r="19" fill="none" stroke="#dcdee0" stroke-width="1.4" stroke-dasharray="3 3"/><circle cx="20" cy="15" r="5.4" fill="none" stroke="#dadcde" stroke-width="2"/><path d="M10 31 Q11 23 20 23" fill="none" stroke="#dadcde" stroke-width="2"/><circle cx="32" cy="32" r="8" fill="#d3d5d7"/><path d="M32 27.6 V36.4 M27.6 32 H36.4" stroke="#fff" stroke-width="2.2" stroke-linecap="round"/></svg>
</div>
</body></html>
